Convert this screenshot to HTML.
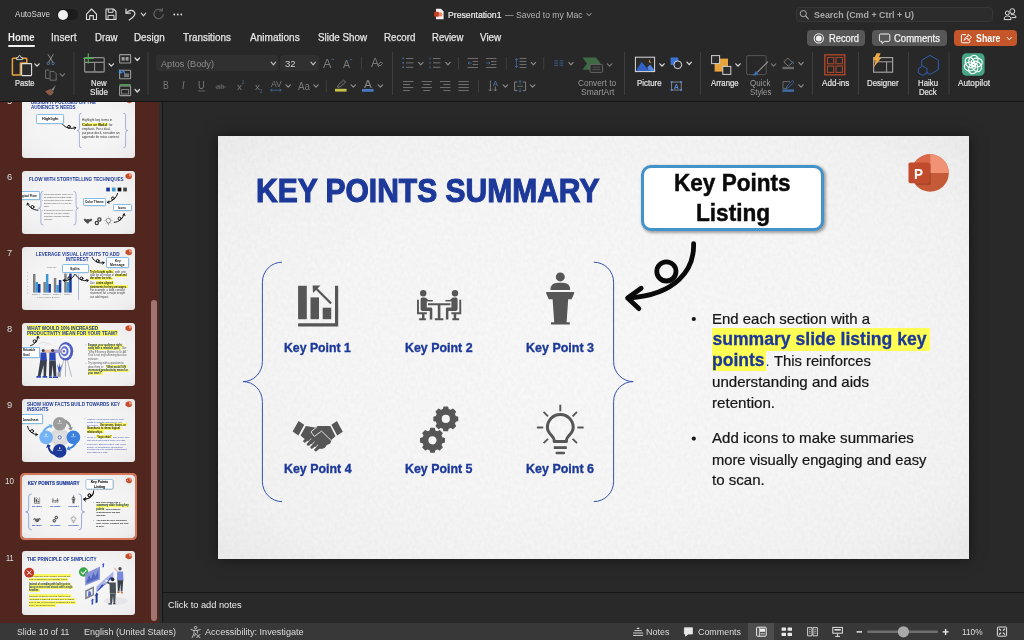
<!DOCTYPE html>
<html lang="en"><head><meta charset="utf-8"><title>Presentation1</title>
<style>
html,body{margin:0;padding:0;background:#292929}
body{width:1024px;height:640px;overflow:hidden;position:relative;font-family:"Liberation Sans",sans-serif}
.t{position:absolute;white-space:nowrap;line-height:1;transform-origin:0 0;display:block}
svg.ov{position:absolute;left:0;top:0;width:1024px;height:640px;overflow:visible;pointer-events:none}
#panel{position:absolute;left:0;top:102px;width:159.4px;height:521px;background:#50261f;overflow:hidden}
#slide{position:absolute;left:218.2px;top:135.9px;width:750.5px;height:422.7px;background:#f1f1f1;
 background-image:radial-gradient(ellipse 75% 75% at 50% 50%,#f8f8f8 0%,#f6f6f6 50%,#f2f2f2 78%,#e9e9e9 100%);box-shadow:0 0 14px rgba(0,0,0,0.5)}
</style></head><body>
<div id="root" style="position:absolute;left:0;top:0;width:1024px;height:640px;will-change:transform">
<div id="top" style="position:absolute;left:0;top:0;width:1024px;height:101.2px;background:#282828"></div>
<div style="position:absolute;left:0;top:100.95px;width:1024px;height:1.15px;background:#151515"></div>
<div style="position:absolute;left:159.4px;top:102px;width:2.5px;height:521px;background:#2e2e2e"></div><div style="position:absolute;left:161.9px;top:102px;width:1px;height:521px;background:#171717"></div>
<div id="panel"><div style="position:absolute;left:0;top:-102px;width:1024px;height:640px"><div style="position:absolute;left:22.0px;top:94.4px;width:113.1px;height:63.6px;border-radius:3px;background:#f1f1f1;background-image:radial-gradient(ellipse 75% 75% at 50% 50%,#f6f6f6 0%,#f4f4f4 50%,#eeeeee 80%,#e2e2e2 100%)"></div><div style="position:absolute;left:22.0px;top:170.6px;width:113.1px;height:63.6px;border-radius:3px;background:#f1f1f1;background-image:radial-gradient(ellipse 75% 75% at 50% 50%,#f6f6f6 0%,#f4f4f4 50%,#eeeeee 80%,#e2e2e2 100%)"></div><span class="t " style="left:7.20px;top:172.00px;font-size:9.6px;font-weight:400;color:#dedede;transform:scaleX(0.9731);">6</span><div style="position:absolute;left:22.0px;top:246.7px;width:113.1px;height:63.6px;border-radius:3px;background:#f1f1f1;background-image:radial-gradient(ellipse 75% 75% at 50% 50%,#f6f6f6 0%,#f4f4f4 50%,#eeeeee 80%,#e2e2e2 100%)"></div><span class="t " style="left:7.20px;top:248.00px;font-size:9.6px;font-weight:400;color:#dedede;transform:scaleX(0.9731);">7</span><div style="position:absolute;left:22.0px;top:322.8px;width:113.1px;height:63.6px;border-radius:3px;background:#f1f1f1;background-image:radial-gradient(ellipse 75% 75% at 50% 50%,#f6f6f6 0%,#f4f4f4 50%,#eeeeee 80%,#e2e2e2 100%)"></div><span class="t " style="left:7.20px;top:324.00px;font-size:9.6px;font-weight:400;color:#dedede;transform:scaleX(0.9731);">8</span><div style="position:absolute;left:22.0px;top:398.8px;width:113.1px;height:63.6px;border-radius:3px;background:#f1f1f1;background-image:radial-gradient(ellipse 75% 75% at 50% 50%,#f6f6f6 0%,#f4f4f4 50%,#eeeeee 80%,#e2e2e2 100%)"></div><span class="t " style="left:7.20px;top:400.00px;font-size:9.6px;font-weight:400;color:#dedede;transform:scaleX(0.9731);">9</span><div style="position:absolute;left:22.0px;top:474.9px;width:113.1px;height:63.6px;border-radius:3px;background:#f1f1f1;background-image:radial-gradient(ellipse 75% 75% at 50% 50%,#f6f6f6 0%,#f4f4f4 50%,#eeeeee 80%,#e2e2e2 100%)"></div><span class="t " style="left:5.40px;top:476.00px;font-size:9.6px;font-weight:400;color:#dedede;transform:scaleX(0.8433);">10</span><div style="position:absolute;left:22.0px;top:551.0px;width:113.1px;height:63.6px;border-radius:3px;background:#f1f1f1;background-image:radial-gradient(ellipse 75% 75% at 50% 50%,#f6f6f6 0%,#f4f4f4 50%,#eeeeee 80%,#e2e2e2 100%)"></div><span class="t " style="left:6.20px;top:553.00px;font-size:9.6px;font-weight:400;color:#dedede;transform:scaleX(0.7624);">11</span><span class="t " style="left:7.20px;top:96.00px;font-size:9.6px;font-weight:400;color:#dedede;transform:scaleX(0.9731);">5</span><span class="t " style="left:30.80px;top:100.00px;font-size:5.4px;font-weight:700;color:#1c3899;transform:scaleX(0.8478);">DESIGN IT FOCUSED ON THE</span><span class="t " style="left:30.80px;top:105.00px;font-size:5.4px;font-weight:700;color:#1c3899;transform:scaleX(0.8398);">AUDIENCE'S NEEDS</span><div style="position:absolute;left:36.3px;top:113.9px;width:27.6px;height:10.5px;box-sizing:border-box;border:0.6px solid #86bde6;border-radius:1.6px;background:#fff;box-shadow:0.2px 0.3px 0.6px rgba(0,0,0,.22)"></div><span class="t " style="left:42.00px;top:118.00px;font-size:3.6px;font-weight:700;color:#111;transform:scaleX(1.0528);">Highlight</span><span class="t " style="left:82.20px;top:119.00px;font-size:3px;font-weight:400;color:#333;transform:scaleX(1.0597);">Highlight key terms in</span><div style="position:absolute;left:82px;top:122.76px;width:25.8px;height:3.74px;background:#faf85e"></div><span class="t " style="left:82.20px;top:124.00px;font-size:3.4px;font-weight:700;color:#222;transform:scaleX(1.1443);">Color or Bold</span><span class="t " style="left:108.60px;top:124.00px;font-size:3px;font-weight:400;color:#333;transform:scaleX(1.0240);">for</span><span class="t " style="left:82.20px;top:128.00px;font-size:3px;font-weight:400;color:#333;transform:scaleX(0.9788);">emphasis. For a dual-</span><span class="t " style="left:82.20px;top:132.00px;font-size:3px;font-weight:400;color:#333;transform:scaleX(1.0681);">purpose deck, consider an</span><span class="t " style="left:82.20px;top:136.00px;font-size:3px;font-weight:400;color:#333;transform:scaleX(1.0526);">appendix for extra content.</span><span class="t " style="left:29.20px;top:177.00px;font-size:5.4px;font-weight:700;color:#1c3899;transform:scaleX(0.8537);">FLOW WITH STORYTELLING TECHNIQUES</span><div style="position:absolute;left:22px;top:191.4px;width:17.8px;height:8.9px;box-sizing:border-box;border:0.6px solid #86bde6;border-left:none;border-radius:0 1.6px 1.6px 0;background:#fff;box-shadow:0.2px 0.3px 0.6px rgba(0,0,0,.22)"></div><span class="t " style="left:22.40px;top:195.00px;font-size:3.2px;font-weight:700;color:#111;transform:scaleX(0.9467);">gical Flow</span><span class="t " style="left:44.40px;top:193.00px;font-size:2.2px;font-weight:400;color:#444;transform:scaleX(0.7948);">Lorem ipsum is simply dummy text of</span><span class="t " style="left:44.40px;top:196.00px;font-size:2.2px;font-weight:400;color:#444;transform:scaleX(0.8118);">the printing and typesetting industry.</span><span class="t " style="left:44.40px;top:199.00px;font-size:2.2px;font-weight:400;color:#444;transform:scaleX(0.7951);">Lorem ipsum has been the industry’s</span><span class="t " style="left:44.40px;top:202.00px;font-size:2.2px;font-weight:400;color:#444;transform:scaleX(0.7906);">standard dummy text ever since the</span><span class="t " style="left:44.40px;top:205.00px;font-size:2.2px;font-weight:400;color:#444;transform:scaleX(0.7601);">1500s.</span><span class="t " style="left:44.40px;top:209.00px;font-size:2.2px;font-weight:400;color:#444;transform:scaleX(0.7949);">It has survived not only five centuries,</span><span class="t " style="left:44.40px;top:212.00px;font-size:2.2px;font-weight:400;color:#444;transform:scaleX(0.8418);">but also the leap into electronic</span><span class="t " style="left:44.40px;top:215.00px;font-size:2.2px;font-weight:400;color:#444;transform:scaleX(0.8066);">typesetting, remaining essentially</span><span class="t " style="left:44.40px;top:218.00px;font-size:2.2px;font-weight:400;color:#444;transform:scaleX(0.7519);">unchanged.</span><div style="position:absolute;left:82.9px;top:198.4px;width:22.9px;height:8.0px;box-sizing:border-box;border:0.6px solid #86bde6;border-radius:1.6px;background:#fff;box-shadow:0.2px 0.3px 0.6px rgba(0,0,0,.22)"></div><span class="t " style="left:85.00px;top:201.00px;font-size:3.2px;font-weight:700;color:#111;transform:scaleX(0.9546);">Color Theme</span><div style="position:absolute;left:113px;top:204.3px;width:18.8px;height:7.1px;box-sizing:border-box;border:0.6px solid #86bde6;border-radius:1.6px;background:#fff;box-shadow:0.2px 0.3px 0.6px rgba(0,0,0,.22)"></div><span class="t " style="left:118.40px;top:207.00px;font-size:3.2px;font-weight:700;color:#111;transform:scaleX(0.9606);">Icons</span><span class="t " style="left:35.70px;top:252.00px;font-size:5.4px;font-weight:700;color:#1c3899;transform:scaleX(0.8386);">LEVERAGE VISUAL LAYOUTS TO ADD</span><span class="t " style="left:65.80px;top:257.00px;font-size:5.4px;font-weight:700;color:#1c3899;transform:scaleX(0.8478);">INTEREST</span><div style="position:absolute;left:106.2px;top:257.2px;width:22.4px;height:11.2px;box-sizing:border-box;border:0.6px solid #86bde6;border-radius:1.6px;background:#fff;box-shadow:0.2px 0.3px 0.6px rgba(0,0,0,.22)"></div><span class="t " style="left:114.60px;top:260.00px;font-size:3.4px;font-weight:700;color:#111;transform:scaleX(0.8982);">Key</span><span class="t " style="left:110.20px;top:264.00px;font-size:3.4px;font-weight:700;color:#111;transform:scaleX(1.0190);">Message</span><span class="t " style="left:46.60px;top:266.00px;font-size:2px;font-weight:400;color:#777;transform:scaleX(1.0301);">Chart Title</span><span class="t " style="left:32.40px;top:294.00px;font-size:1.7px;font-weight:400;color:#666;transform:scaleX(0.9195);">Category 1</span><span class="t " style="left:42.80px;top:294.00px;font-size:1.7px;font-weight:400;color:#666;transform:scaleX(0.9195);">Category 2</span><span class="t " style="left:53.20px;top:294.00px;font-size:1.7px;font-weight:400;color:#666;transform:scaleX(0.9195);">Category 3</span><span class="t " style="left:63.60px;top:294.00px;font-size:1.7px;font-weight:400;color:#666;transform:scaleX(0.9195);">Category 4</span><span class="t " style="left:38.60px;top:297.00px;font-size:1.6px;font-weight:400;color:#666;transform:scaleX(0.9216);">Series 1</span><span class="t " style="left:46.20px;top:297.00px;font-size:1.6px;font-weight:400;color:#666;transform:scaleX(0.9216);">Series 2</span><span class="t " style="left:53.60px;top:297.00px;font-size:1.6px;font-weight:400;color:#666;transform:scaleX(0.9216);">Series 3</span><div style="position:absolute;left:61.7px;top:263.6px;width:27.6px;height:9.9px;box-sizing:border-box;border:0.6px solid #86bde6;border-radius:1.6px;background:#fff;box-shadow:0.2px 0.3px 0.6px rgba(0,0,0,.22)"></div><span class="t " style="left:70.40px;top:268.00px;font-size:3.5px;font-weight:700;color:#111;transform:scaleX(1.0282);">Splits</span><div style="position:absolute;left:90px;top:270.23px;width:24.2px;height:3.19px;background:#faf85e"></div><span class="t " style="left:90.40px;top:271.00px;font-size:2.9px;font-weight:700;color:#222;transform:scaleX(0.8989);">Try left-right splits,</span><span class="t " style="left:114.80px;top:271.00px;font-size:2.9px;font-weight:400;color:#444;transform:scaleX(1.0203);">with one</span><span class="t " style="left:90.40px;top:274.00px;font-size:2.9px;font-weight:400;color:#444;transform:scaleX(0.9467);">side for an image or</span><div style="position:absolute;left:114.8px;top:273.53px;width:12.6px;height:3.19px;background:#faf85e"></div><span class="t " style="left:115.20px;top:274.00px;font-size:2.9px;font-weight:700;color:#222;transform:scaleX(0.8345);">visual and</span><div style="position:absolute;left:90px;top:276.93px;width:22.6px;height:3.19px;background:#faf85e"></div><span class="t " style="left:90.40px;top:277.00px;font-size:2.9px;font-weight:700;color:#222;transform:scaleX(0.9167);">the other for text.</span><span class="t " style="left:90.40px;top:282.00px;font-size:2.9px;font-weight:400;color:#444;transform:scaleX(0.8948);">Use</span><div style="position:absolute;left:95.8px;top:281.43px;width:17.8px;height:3.19px;background:#faf85e"></div><span class="t " style="left:96.20px;top:282.00px;font-size:2.9px;font-weight:700;color:#222;transform:scaleX(0.8601);">centre-aligned</span><div style="position:absolute;left:90px;top:285.13px;width:37.6px;height:3.19px;background:#faf85e"></div><span class="t " style="left:90.40px;top:286.00px;font-size:2.9px;font-weight:700;color:#222;transform:scaleX(0.8945);">statements for key messages.</span><span class="t " style="left:90.40px;top:289.00px;font-size:2.9px;font-weight:400;color:#444;transform:scaleX(0.9403);">For example, a bold, centred</span><span class="t " style="left:90.40px;top:292.00px;font-size:2.9px;font-weight:400;color:#444;transform:scaleX(0.9593);">statement for a major insight</span><span class="t " style="left:90.40px;top:296.00px;font-size:2.9px;font-weight:400;color:#444;transform:scaleX(0.9304);">can add impact.</span><div style="position:absolute;left:26.6px;top:324.98px;width:72.4px;height:5.94px;background:#faf85e"></div><span class="t " style="left:27.20px;top:326.00px;font-size:5.4px;font-weight:700;color:#1c3899;transform:scaleX(0.8561);">WHAT WOULD 10% INCREASED</span><div style="position:absolute;left:26.6px;top:330.38px;width:91.8px;height:5.94px;background:#faf85e"></div><span class="t " style="left:27.20px;top:331.00px;font-size:5.4px;font-weight:700;color:#1c3899;transform:scaleX(0.8441);">PRODUCTIVITY MEAN FOR YOUR TEAM?</span><div style="position:absolute;left:22px;top:347.2px;width:18.4px;height:10.4px;box-sizing:border-box;border:0.6px solid #86bde6;border-left:none;border-radius:0 1.6px 1.6px 0;background:#fff;box-shadow:0.2px 0.3px 0.6px rgba(0,0,0,.22)"></div><span class="t " style="left:22.60px;top:349.00px;font-size:3.2px;font-weight:700;color:#111;transform:scaleX(0.8740);">Relatable</span><span class="t " style="left:22.60px;top:354.00px;font-size:3.2px;font-weight:700;color:#111;transform:scaleX(0.9304);">Goal</span><div style="position:absolute;left:88px;top:343.54px;width:34.6px;height:2.97px;background:#faf85e"></div><span class="t " style="left:88.40px;top:345.00px;font-size:2.7px;font-weight:700;color:#1c2f80;transform:scaleX(0.9490);">Engage your audience right</span><div style="position:absolute;left:88px;top:347.14px;width:32.6px;height:2.97px;background:#faf85e"></div><span class="t " style="left:88.40px;top:348.00px;font-size:2.7px;font-weight:700;color:#1c2f80;transform:scaleX(0.9418);">away with a relatable goal,</span><span class="t " style="left:121.60px;top:348.00px;font-size:2.7px;font-weight:400;color:#555;transform:scaleX(1.0873);">like</span><span class="t " style="left:88.40px;top:352.00px;font-size:2.7px;font-weight:400;color:#555;transform:scaleX(0.9797);">“Why Efficiency Matters to Us All.”</span><span class="t " style="left:88.40px;top:355.00px;font-size:2.7px;font-weight:400;color:#555;transform:scaleX(0.9823);">This is not only affirming but also</span><span class="t " style="left:88.40px;top:359.00px;font-size:2.7px;font-weight:400;color:#555;transform:scaleX(0.9401);">inclusive.</span><span class="t " style="left:88.40px;top:363.00px;font-size:2.7px;font-weight:400;color:#555;transform:scaleX(0.9954);">Try opening with a question to</span><span class="t " style="left:88.40px;top:367.00px;font-size:2.7px;font-weight:400;color:#555;transform:scaleX(0.9789);">draw them in:</span><div style="position:absolute;left:105.6px;top:365.34px;width:21.0px;height:2.97px;background:#faf85e"></div><span class="t " style="left:106.20px;top:367.00px;font-size:2.7px;font-weight:700;color:#1c2f80;transform:scaleX(0.8870);">“What would 10%</span><div style="position:absolute;left:88px;top:368.74px;width:40.6px;height:2.97px;background:#faf85e"></div><span class="t " style="left:88.40px;top:370.00px;font-size:2.7px;font-weight:700;color:#1c2f80;transform:scaleX(0.9759);">increased productivity mean for</span><div style="position:absolute;left:88px;top:372.14px;width:15.0px;height:2.97px;background:#faf85e"></div><span class="t " style="left:88.40px;top:373.00px;font-size:2.7px;font-weight:700;color:#1c2f80;transform:scaleX(0.8963);">your team?”</span><span class="t " style="left:27.20px;top:402.00px;font-size:5.4px;font-weight:700;color:#1c3899;transform:scaleX(0.8446);">SHOW HOW FACTS BUILD TOWARDS KEY</span><span class="t " style="left:27.20px;top:407.00px;font-size:5.4px;font-weight:700;color:#1c3899;transform:scaleX(0.8481);">INSIGHTS</span><div style="position:absolute;left:22px;top:414.3px;width:20.7px;height:10.2px;box-sizing:border-box;border:0.6px solid #86bde6;border-left:none;border-radius:0 1.6px 1.6px 0;background:#fff;box-shadow:0.2px 0.3px 0.6px rgba(0,0,0,.22)"></div><span class="t " style="left:22.60px;top:419.00px;font-size:3.4px;font-weight:700;color:#111;transform:scaleX(1.1037);">lowchart</span><span class="t " style="left:87.40px;top:419.00px;font-size:2.5px;font-weight:400;color:#3a4fa8;transform:scaleX(0.9336);">Illustrate connections between data</span><span class="t " style="left:87.40px;top:422.00px;font-size:2.5px;font-weight:400;color:#3a4fa8;transform:scaleX(0.9259);">points to lead the audience to your</span><span class="t " style="left:87.40px;top:425.00px;font-size:2.5px;font-weight:400;color:#3a4fa8;transform:scaleX(0.9268);">conclusion.</span><div style="position:absolute;left:100px;top:423.44px;width:26.6px;height:2.97px;background:#faf85e"></div><span class="t " style="left:100.40px;top:425.00px;font-size:2.7px;font-weight:700;color:#222;transform:scaleX(0.9235);">Use arrows, boxes, or</span><div style="position:absolute;left:87px;top:426.84px;width:34.0px;height:2.97px;background:#faf85e"></div><span class="t " style="left:87.40px;top:428.00px;font-size:2.7px;font-weight:700;color:#222;transform:scaleX(0.9819);">flowcharts to show logical</span><div style="position:absolute;left:87px;top:430.34px;width:16.6px;height:2.97px;background:#faf85e"></div><span class="t " style="left:87.40px;top:432.00px;font-size:2.7px;font-weight:700;color:#222;transform:scaleX(0.9037);">relationships.</span><span class="t " style="left:87.40px;top:437.00px;font-size:2.5px;font-weight:400;color:#3a4fa8;transform:scaleX(0.8756);">Create a</span><div style="position:absolute;left:96.4px;top:435.34px;width:15.6px;height:2.97px;background:#faf85e"></div><span class="t " style="left:96.80px;top:437.00px;font-size:2.7px;font-weight:700;color:#222;transform:scaleX(0.8844);">“logic chain”</span><span class="t " style="left:112.80px;top:437.00px;font-size:2.5px;font-weight:400;color:#3a4fa8;transform:scaleX(0.8739);">slide where each</span><span class="t " style="left:87.40px;top:440.00px;font-size:2.5px;font-weight:400;color:#3a4fa8;transform:scaleX(0.9140);">data point connects to build your case.</span><span class="t " style="left:87.40px;top:444.00px;font-size:2.5px;font-weight:400;color:#3a4fa8;transform:scaleX(0.9129);">Reference: Edward Tufte’s “The Visual</span><span class="t " style="left:87.40px;top:447.00px;font-size:2.5px;font-weight:400;color:#3a4fa8;transform:scaleX(0.9220);">Display of Quantitative Information”</span><span class="t " style="left:87.40px;top:449.00px;font-size:2.5px;font-weight:400;color:#3a4fa8;transform:scaleX(0.9285);">explains ways to illustrate relationships</span><span class="t " style="left:87.40px;top:452.00px;font-size:2.5px;font-weight:400;color:#3a4fa8;transform:scaleX(0.9212);">and patterns in data.</span><span class="t " style="left:27.20px;top:557.00px;font-size:5.4px;font-weight:700;color:#1c3899;transform:scaleX(0.8512);">THE PRINCIPLE OF SIMPLICITY</span><div style="position:absolute;left:28.8px;top:574.45px;width:41.8px;height:2.75px;background:#faf85e"></div><span class="t " style="left:29.20px;top:576.00px;font-size:2.5px;font-weight:400;color:#333;transform:scaleX(0.8039);">Keep slides free from excessive elements that</span><div style="position:absolute;left:28.8px;top:577.85px;width:39.4px;height:2.75px;background:#faf85e"></div><span class="t " style="left:29.20px;top:579.00px;font-size:2.5px;font-weight:400;color:#333;transform:scaleX(0.7825);">dilute or distract from your message content.</span><div style="position:absolute;left:28.8px;top:582.54px;width:42.4px;height:2.97px;background:#faf85e"></div><span class="t " style="left:29.20px;top:584.00px;font-size:2.7px;font-weight:700;color:#1c2f80;transform:scaleX(0.8493);">Instead of crowding with bullet points,</span><div style="position:absolute;left:28.8px;top:585.84px;width:44.4px;height:2.97px;background:#faf85e"></div><span class="t " style="left:29.20px;top:587.00px;font-size:2.7px;font-weight:700;color:#1c2f80;transform:scaleX(0.8342);">focus on one or two visuals with a single</span><div style="position:absolute;left:28.8px;top:589.14px;width:10.8px;height:2.97px;background:#faf85e"></div><span class="t " style="left:29.20px;top:590.00px;font-size:2.7px;font-weight:700;color:#1c2f80;transform:scaleX(0.8579);">headline.</span><div style="position:absolute;left:28.8px;top:594.45px;width:42.4px;height:2.75px;background:#faf85e"></div><span class="t " style="left:29.20px;top:596.00px;font-size:2.5px;font-weight:400;color:#333;transform:scaleX(0.8675);">Simplicity means we have the guts to point.</span><div style="position:absolute;left:28.8px;top:597.65px;width:45.8px;height:2.75px;background:#faf85e"></div><span class="t " style="left:29.20px;top:599.00px;font-size:2.5px;font-weight:400;color:#333;transform:scaleX(0.8345);">“Perfection is achieved not when there is nothing</span><div style="position:absolute;left:28.8px;top:600.95px;width:46.8px;height:2.75px;background:#faf85e"></div><span class="t " style="left:29.20px;top:602.00px;font-size:2.5px;font-weight:400;color:#333;transform:scaleX(0.8378);">more to add, but when there is nothing left to take</span><div style="position:absolute;left:28.8px;top:604.25px;width:27.4px;height:2.75px;background:#faf85e"></div><span class="t " style="left:29.20px;top:605.00px;font-size:2.5px;font-weight:400;color:#333;transform:scaleX(0.8296);">away,” as a guiding principle.</span><svg class="ov" viewBox="0 0 1024 640"><circle cx="129.4" cy="100.2" r="3.0" fill="#c55a38"/><path d="M129.4,100.2 V97.2 A3.0,3.0 0 0 1 132.4,100.2 Z" fill="#f09273"/><rect x="125.95" y="98.52" width="3.36" height="3.36" rx="0.3" fill="#c14b2c"/><g fill="none" stroke="#111" stroke-width="1.0" stroke-linecap="round" stroke-linejoin="round"><path d="M62.60,124.40 C65.88,128.23 71.16,129.47 75.80,127.50"/><circle cx="69.01" cy="126.77" r="1.40"/><path d="M73.84,127.11 L75.80,127.50 L74.72,129.19"/></g><path d="M81.6,113.2 A2.1999999999999957,2.1999999999999957 0 0 0 79.4,115.4 V128.3 A2.1999999999999957,2.1999999999999957 0 0 1 77.2,130.5 A2.1999999999999957,2.1999999999999957 0 0 1 79.4,132.7 V145.60000000000002 A2.1999999999999957,2.1999999999999957 0 0 0 81.6,147.8" fill="none" stroke="#5570c0" stroke-width="0.5"/><path d="M123.4,113.2 A2.1999999999999957,2.1999999999999957 0 0 1 125.6,115.4 V128.3 A2.1999999999999957,2.1999999999999957 0 0 0 127.8,130.5 A2.1999999999999957,2.1999999999999957 0 0 0 125.6,132.7 V145.60000000000002 A2.1999999999999957,2.1999999999999957 0 0 1 123.4,147.8" fill="none" stroke="#5570c0" stroke-width="0.5"/><circle cx="129" cy="176.2" r="3.0" fill="#c55a38"/><path d="M129,176.2 V173.2 A3.0,3.0 0 0 1 132.0,176.2 Z" fill="#f09273"/><rect x="125.55" y="174.52" width="3.36" height="3.36" rx="0.3" fill="#c14b2c"/><rect x="106.2" y="187.6" width="3.7" height="3.8" fill="#1c3899"/><rect x="111.9" y="187.6" width="3.7" height="3.8" fill="#3a98d4"/><rect x="117.6" y="187.6" width="3.7" height="3.8" fill="#0a0a0a"/><rect x="123.2" y="187.6" width="3.7" height="3.8" fill="#444"/><g fill="none" stroke="#111" stroke-width="0.95" stroke-linecap="round" stroke-linejoin="round"><path d="M38.00,210.20 C33.42,210.22 29.18,207.42 27.40,203.20"/><circle cx="32.48" cy="207.04" r="1.50"/><path d="M27.00,205.16 L27.40,203.20 L29.08,204.28"/></g><path d="M43.2,191.4 A2.3000000000000007,2.3000000000000007 0 0 0 40.900000000000006,193.70000000000002 V205.89999999999998 A2.3000000000000007,2.3000000000000007 0 0 1 38.6,208.2 A2.3000000000000007,2.3000000000000007 0 0 1 40.900000000000006,210.5 V222.7 A2.3000000000000007,2.3000000000000007 0 0 0 43.2,225" fill="none" stroke="#5570c0" stroke-width="0.5"/><path d="M73.6,191.4 A2.4000000000000057,2.4000000000000057 0 0 1 76.0,193.8 V205.79999999999998 A2.4000000000000057,2.4000000000000057 0 0 0 78.4,208.2 A2.4000000000000057,2.4000000000000057 0 0 0 76.0,210.6 V222.6 A2.4000000000000057,2.4000000000000057 0 0 1 73.6,225" fill="none" stroke="#5570c0" stroke-width="0.5"/><circle cx="42.6" cy="194.3" r="0.3" fill="#444"/><circle cx="42.6" cy="200.6" r="0.3" fill="#444"/><circle cx="42.6" cy="210.5" r="0.3" fill="#444"/><g fill="none" stroke="#111" stroke-width="1.0" stroke-linecap="round" stroke-linejoin="round"><path d="M117.60,193.40 C116.32,198.11 112.24,201.67 107.40,202.30"/><circle cx="112.91" cy="198.33" r="1.40"/><path d="M109.18,203.21 L107.40,202.30 L108.89,200.97"/></g><g fill="none" stroke="#111" stroke-width="0.95" stroke-linecap="round" stroke-linejoin="round"><path d="M114.20,222.40 C119.09,222.02 123.09,218.58 124.20,213.80"/><circle cx="119.64" cy="218.61" r="1.50"/><path d="M122.73,215.15 L124.20,213.80 L124.93,215.66"/></g><path d="M83.6,219.6 L85,218.6 L86.2,219.4 L88,219 L89.8,219.4 L91,218.6 L92.4,219.6 L91.2,221.2 L89.6,221.4 L88.4,223.6 L87.2,223.4 L85,221.4 Z" fill="#4a4a4a"/><circle cx="99.4" cy="219.4" r="1.6" fill="none" stroke="#444" stroke-width="1.3"/><circle cx="96.8" cy="223" r="1.6" fill="none" stroke="#444" stroke-width="1.3"/><circle cx="108.4" cy="220.6" r="2.2" fill="none" stroke="#555" stroke-width="0.6"/><path d="M107.4,223.6 H109.4 M107.8,224.8 H109 M108.4,216.4 V217.4 M104.4,220.6 H105.4 M111.4,220.6 H112.4 M105.6,217.8 L106.3,218.5 M111.2,217.8 L110.5,218.5 M105.6,223.4 L106.3,222.7 M111.2,223.4 L110.5,222.7" stroke="#555" stroke-width="0.5"/><circle cx="129" cy="252.2" r="3.0" fill="#c55a38"/><path d="M129,252.2 V249.2 A3.0,3.0 0 0 1 132.0,252.2 Z" fill="#f09273"/><rect x="125.55" y="250.52" width="3.36" height="3.36" rx="0.3" fill="#c14b2c"/><g fill="none" stroke="#111" stroke-width="1.0" stroke-linecap="round" stroke-linejoin="round"><path d="M92.10,257.40 C94.45,261.84 99.25,263.92 104.10,262.60"/><circle cx="97.72" cy="260.88" r="1.40"/><path d="M102.21,261.94 L104.10,262.60 L102.80,264.12"/></g><rect x="33.0" y="274" width="2.5" height="18.6" fill="#808080"/><rect x="35.5" y="282" width="2.5" height="10.6" fill="#3a98d4"/><rect x="38.0" y="284" width="2.5" height="8.6" fill="#1c3899"/><rect x="43.4" y="282" width="2.5" height="10.6" fill="#808080"/><rect x="45.9" y="274" width="2.5" height="18.6" fill="#3a98d4"/><rect x="48.4" y="284" width="2.5" height="8.6" fill="#1c3899"/><rect x="53.8" y="278" width="2.5" height="14.6" fill="#808080"/><rect x="56.3" y="285" width="2.5" height="7.6" fill="#3a98d4"/><rect x="58.8" y="280" width="2.5" height="12.6" fill="#1c3899"/><rect x="64.2" y="273.6" width="2.5" height="19.0" fill="#808080"/><rect x="66.7" y="282" width="2.5" height="10.6" fill="#3a98d4"/><rect x="69.2" y="273.6" width="2.5" height="19.0" fill="#1c3899"/><rect x="27" y="272.40000000000003" width="1.2" height="0.4" fill="#888"/><rect x="27" y="275.8" width="1.2" height="0.4" fill="#888"/><rect x="27" y="279.2" width="1.2" height="0.4" fill="#888"/><rect x="27" y="282.6" width="1.2" height="0.4" fill="#888"/><rect x="27" y="286.0" width="1.2" height="0.4" fill="#888"/><rect x="27" y="289.40000000000003" width="1.2" height="0.4" fill="#888"/><rect x="27" y="292.8" width="1.2" height="0.4" fill="#888"/><rect x="37.2" y="297" width="1" height="0.6" fill="#808080"/><rect x="44.800000000000004" y="297" width="1" height="0.6" fill="#3a98d4"/><rect x="52.2" y="297" width="1" height="0.6" fill="#1c3899"/><rect x="78.3" y="273.6" width="0.45" height="26.6" fill="#5570c0"/><g fill="none" stroke="#111" stroke-width="1.0" stroke-linecap="round" stroke-linejoin="round"><path d="M74.50,274.60 C72.48,279.02 67.96,281.30 63.20,280.30"/><circle cx="69.25" cy="278.23" r="1.40"/><path d="M64.58,281.75 L63.20,280.30 L65.05,279.54"/></g><g fill="none" stroke="#111" stroke-width="1.0" stroke-linecap="round" stroke-linejoin="round"><path d="M75.70,274.60 C78.08,279.31 83.08,281.59 88.20,280.30"/><circle cx="81.50" cy="278.43" r="1.40"/><path d="M86.32,279.61 L88.20,280.30 L86.88,281.80"/></g><circle cx="129" cy="328.2" r="3.0" fill="#c55a38"/><path d="M129,328.2 V325.2 A3.0,3.0 0 0 1 132.0,328.2 Z" fill="#f09273"/><rect x="125.55" y="326.52" width="3.36" height="3.36" rx="0.3" fill="#c14b2c"/><g fill="none" stroke="#111" stroke-width="0.95" stroke-linecap="round" stroke-linejoin="round"><path d="M30.60,345.60 C34.84,344.47 37.80,340.79 38.00,336.40"/><circle cx="34.65" cy="341.28" r="1.50"/><path d="M36.80,338.00 L38.00,336.40 L39.05,338.10"/></g><path d="M64.2,358 L59.4,376.8 M66.8,358 L71.6,376.8 M65.5,358 V376.8" stroke="#9aa0a8" stroke-width="0.7" fill="none"/><ellipse cx="65.8" cy="351.3" rx="7.4" ry="9.3" fill="#4a5fc0"/><ellipse cx="65" cy="351.3" rx="5.4" ry="7" fill="#f4f4fa"/><ellipse cx="64.6" cy="351.3" rx="3.9" ry="5" fill="#5a6fd0"/><ellipse cx="64.2" cy="351.3" rx="2.3" ry="3" fill="#f4f4fa"/><ellipse cx="64" cy="351.3" rx="1" ry="1.3" fill="#4a5fc0"/><rect x="43" y="349.8" width="19.6" height="3" rx="1" fill="#e9b9a6"/><rect x="52.6" y="349.6" width="9" height="3.4" fill="#8a96d8" opacity="0.8"/><circle cx="43.2" cy="350.6" r="1.5" fill="#3a3a4a"/><circle cx="52.6" cy="350.4" r="1.5" fill="#3a3a4a"/><path d="M40.6,352.6 H46.2 L47,361 H40.2 Z" fill="#2a46b8"/><path d="M49.4,352.6 H55.4 L55.8,360.6 H49.2 Z" fill="#2a46b8"/><path d="M40.2,360.6 H46.8 L46,376 H43.6 L43.6,365 L40.6,376 H37.8 Z" fill="#3a3f4c"/><path d="M49.2,360.4 H55.8 L56.4,376.6 H53.6 L52.6,365 L51.6,376.6 H49 Z" fill="#3a3f4c"/><path d="M36.4,376 H41 V377.8 H36.4 Z M42.6,376 H47.2 V377.8 H42.6 Z M49,376.6 H52.2 V378 H49 Z M53,376.6 H58 V378 H53 Z" fill="#2a46b8"/><path d="M58.6,372 L57,364 L58.8,367.6 L59.4,362.6 L60,367.6 L62,364.4 L60.2,372 Z" fill="#3a55c8"/><rect x="57.6" y="372" width="3.2" height="4.8" fill="#9aa0a8"/><path d="M39.6,343.6 Q43,341 47,343.4 M45,344.8 Q48,342.6 51,344.6" stroke="#c8c8cc" stroke-width="0.4" fill="none"/><rect x="85.2" y="344.8" width="1.2" height="0.4" fill="#6a7ac0"/><rect x="85.2" y="363.1" width="1.2" height="0.4" fill="#6a7ac0"/><circle cx="129" cy="404.2" r="3.0" fill="#c55a38"/><path d="M129,404.2 V401.2 A3.0,3.0 0 0 1 132.0,404.2 Z" fill="#f09273"/><rect x="125.55" y="402.52" width="3.36" height="3.36" rx="0.3" fill="#c14b2c"/><g fill="none" stroke="#111" stroke-width="0.95" stroke-linecap="round" stroke-linejoin="round"><path d="M27.60,426.40 C28.57,431.21 32.49,434.49 37.40,434.60"/><circle cx="31.99" cy="431.11" r="1.50"/><path d="M35.77,433.43 L37.40,434.60 L35.72,435.69"/></g><path d="M59.7,424 L73,437.4 L59.7,450.6 L46.4,437.4 Z" fill="#dcdcdc"/><path d="M63.6,419 Q70.6,421 71.4,427.6 L73,426.8 L71.2,430.6 L68,428.6 L69.8,428 Q68.6,423.4 63,421.6 Z" fill="#8f8f8f"/><path d="M77.6,441.6 Q75.6,447.6 70,449 L70.6,450.6 L66.6,449.4 L68.4,446 L69.2,447.4 Q73.6,446.4 75.4,441 Z" fill="#3a80dc"/><path d="M55.6,455.6 Q48.6,453.6 47.6,447.2 L46,448 L47.8,444 L51,446 L49.4,446.8 Q50.4,451.4 56,453.2 Z" fill="#1c3899"/><path d="M41.8,433 Q43.6,427.2 49.4,425.6 L48.8,424 L52.8,425.2 L51,428.6 L50.2,427.2 Q45.8,428.2 44,433.6 Z" fill="#6aaef0"/><circle cx="59.7" cy="423.8" r="6.8" fill="#9c9c9c"/><rect x="57.300000000000004" y="422.90000000000003" width="4.8" height="0.6" fill="#fff" opacity="0.7"/><rect x="59.0" y="420.2" width="1.4" height="1.8" fill="#fff" opacity="0.8"/><circle cx="46.1" cy="437.4" r="6.8" fill="#74b4f4"/><rect x="43.7" y="436.5" width="4.8" height="0.6" fill="#fff" opacity="0.7"/><rect x="45.4" y="433.79999999999995" width="1.4" height="1.8" fill="#fff" opacity="0.8"/><circle cx="73.4" cy="437.4" r="6.8" fill="#3a80dc"/><rect x="71.0" y="436.5" width="4.8" height="0.6" fill="#fff" opacity="0.7"/><rect x="72.7" y="433.79999999999995" width="1.4" height="1.8" fill="#fff" opacity="0.8"/><circle cx="59.7" cy="450.9" r="6.8" fill="#1c3899"/><rect x="57.300000000000004" y="450.0" width="4.8" height="0.6" fill="#fff" opacity="0.7"/><rect x="59.0" y="447.29999999999995" width="1.4" height="1.8" fill="#fff" opacity="0.8"/><circle cx="59.7" cy="437.4" r="3.2" fill="#ececec"/><circle cx="59.7" cy="437.4" r="1.7" fill="none" stroke="#1c3899" stroke-width="0.7"/><rect x="84.4" y="418.40000000000003" width="0.8" height="0.8" fill="#9aa6d8"/><rect x="84.4" y="436.40000000000003" width="0.8" height="0.8" fill="#9aa6d8"/><rect x="84.4" y="443.6" width="0.8" height="0.8" fill="#9aa6d8"/><circle cx="129" cy="556.3" r="3.0" fill="#c55a38"/><path d="M129,556.3 V553.3 A3.0,3.0 0 0 1 132.0,556.3 Z" fill="#f09273"/><rect x="125.55" y="554.62" width="3.36" height="3.36" rx="0.3" fill="#c14b2c"/><circle cx="29.2" cy="572.7" r="4.9" fill="#c0392b"/><path d="M27.4,570.9 L31,574.5 M31,570.9 L27.4,574.5" stroke="#fff" stroke-width="1" stroke-linecap="round"/><circle cx="83.6" cy="572" r="4.7" fill="#3aa64a"/><path d="M81.2,572 L83,574 L86.2,570.4" stroke="#fff" stroke-width="1.1" fill="none" stroke-linecap="round" stroke-linejoin="round"/><path d="M85.2,573.4 L100,566.6 V579.6 L85.2,585.6 Z" fill="#8a96d8"/><path d="M86.6,581.6 L89,575 L91,579 L93.4,572.4 L95.4,576.6 L98.4,569.6 V578.6 L86.6,583.6 Z" fill="#5468c0"/><path d="M96.4,586.4 L113.4,571.6 V577.6 L96.4,592.6 Z" fill="#aab2e6"/><path d="M97.4,590.6 L102,584.6 L105,585 L110,577.6 L112.6,577 L97.4,591.6 Z" fill="#2a46b8"/><path d="M85.2,590.4 L94,586.2 V595.2 L85.2,599.4 Z" fill="#7a7f8a"/><path d="M86.6,591.4 L92.6,588.6 V594.2 L86.6,597 Z" fill="#e8eaf4"/><path d="M88.6,591 Q91.4,591 91,595 L88,596.2 Z" fill="#5468c0"/><path d="M95.6,603.2 V595.6 L94.4,596.2 L96.6,592.6 L98.6,594.4 L97.6,594.8 V602.2 Z" fill="#1c3899"/><path d="M91.6,605 V600.6 L90.6,601.2 L92.4,598.4 L94,599.8 L93.2,600.2 V604.2 Z" fill="#3a55c8"/><path d="M102.6,567.6 V564.8 L101.8,565.2 L103.2,563 L104.6,564.2 L104,564.6 V567 Z" fill="#3a55c8"/><ellipse cx="116" cy="601" rx="12" ry="4" fill="#e6e6ea"/><circle cx="120" cy="568.8" r="1.7" fill="#4a4a55"/><path d="M117.2,571.6 H123 L123.6,580.4 H117 Z" fill="#7a8ad8"/><path d="M117.2,572 L114.6,569.6 L114,568 L114.8,567.6 L117.4,570.8 Z" fill="#e9b9a6"/><path d="M117.4,580.2 H123.2 L122.4,591.6 H120.8 L120.4,583.6 L119.4,591.6 H117.8 Z" fill="#3a3f4c"/><path d="M117.2,591.6 H119.6 V593 H117.2 Z M120.8,592 H123 V593.6 H120.8 Z" fill="#c8855a"/><circle cx="112.6" cy="579.4" r="1.8" fill="#2a2a33"/><path d="M109.6,582.6 H115.8 L116,593.6 H109.8 Z" fill="#4a5058"/><path d="M109.8,584.6 L106.6,583 L106.2,581.4 L107.6,581 L110.2,583 Z" fill="#4a5058"/><circle cx="106.4" cy="581" r="1.3" fill="#f0f0f4"/><path d="M110,593.4 H115.8 L115.2,603 H113.6 L113,596 L112,603.6 H110.2 Z" fill="#4a5058"/><path d="M108.4,603.2 H112 V604.6 H108.4 Z M113.2,603 H115.4 V604.2 H113.2 Z" fill="#3a3f4c"/></svg><div style="position:absolute;left:0;top:0;width:1024px;height:640px;transform-origin:0 0;transform:translate(22.0px,474.9px) scale(0.15057) translate(-218.2px,-135.9px)"><svg class="ov" viewBox="0 0 1024 640"><path d="M282,262.2 A19.6,20 0 0 0 262.4,282.2 V361.6 A19.4,20 0 0 1 243,381.6 A19.4,20 0 0 1 262.4,401.6 V481.6 A19.6,20 0 0 0 282,501.6" fill="none" stroke="#3553ae" stroke-width="1"/><path d="M593.8,262.2 A19.8,20 0 0 1 613.6,282.2 V361.6 A19.6,20 0 0 0 633.2,381.6 A19.6,20 0 0 0 613.6,401.6 V481.6 A19.8,20 0 0 1 593.8,501.6" fill="none" stroke="#3553ae" stroke-width="1"/><g fill="#565656"><rect x="298.1" y="285.8" width="8.7" height="33.4"/><rect x="310.5" y="297.4" width="8.5" height="21.8"/><rect x="322.7" y="307.7" width="8.5" height="11.5"/><path d="M335,285.8 H338.2 V326.5 H298.1 V323.2 H335 Z"/><path d="M312.6,285.6 H320.4 L317.6,288.4 L331.9,302.7 L330.3,304.3 L316,290 L313,293 Z"/></g><g fill="#565656"><circle cx="423.2" cy="293.2" r="3.2"/><path d="M420.6,299.4 Q420.6,297.6 422.4,297.6 H424.4 Q425.8,297.6 426.6,298.6 L428.2,300 H432.2 Q433,300 433,300.8 Q433,301.6 432.2,301.6 H427.6 L426.8,301.2 V307.6 H431 Q432.3,307.6 432.3,308.9 V319.4 H429.8 V310.9 H422.4 Q420.6,310.9 420.6,309.1 Z"/><path d="M417,299.8 H418.9 V312.2 H426.8 V314.3 H424.5 V318.2 H425.9 V320.3 H419.1 V318.2 H422 V314.3 H417 Z"/><g transform="translate(878.2,0) scale(-1,1)"><circle cx="423.2" cy="293.2" r="3.2"/><path d="M420.6,299.4 Q420.6,297.6 422.4,297.6 H424.4 Q425.8,297.6 426.6,298.6 L428.2,300 H432.2 Q433,300 433,300.8 Q433,301.6 432.2,301.6 H427.6 L426.8,301.2 V307.6 H431 Q432.3,307.6 432.3,308.9 V319.4 H429.8 V310.9 H422.4 Q420.6,310.9 420.6,309.1 Z"/><path d="M417,299.8 H418.9 V312.2 H426.8 V314.3 H424.5 V318.2 H425.9 V320.3 H419.1 V318.2 H422 V314.3 H417 Z"/></g><path d="M428,303.3 H450.4 V305.2 H440.4 V318.2 H443.4 V320.3 H434.8 V318.2 H437.8 V305.2 H428 Z"/></g><g fill="#565656"><circle cx="560.3" cy="276.9" r="4.5"/><path d="M550.4,290 Q550.4,282.8 558,282.8 H562.6 Q570.2,282.8 570.2,290 Z"/><path d="M546.2,292 H574.1 V293.6 L571.6,299.2 H568.2 L566.6,322.2 H569.8 V324.5 H551 V322.2 H554.2 L552.6,299.2 H548.8 L546.2,293.6 Z"/></g><g fill="#565656"><polygon points="298.59,420.94 304.22,424.69 298.44,435.47 292.66,431.56"/><polygon points="336.88,420.94 342.81,431.72 337.19,435.47 331.41,424.69"/><polygon points="305.78,426.09 315.00,427.50 317.50,426.09 330.31,426.09 335.47,436.25 331.56,439.69 330.31,443.44 326.88,445.00 324.69,448.12 321.56,449.06 316.88,448.12 302.81,437.50 300.62,435.47"/></g><g stroke="#565656" stroke-width="3.1" stroke-linecap="round" fill="none"><path d="M309.06,437.34 L304.69,441.09 M312.50,440.47 L308.28,444.22 M315.94,443.59 L311.88,447.19 M319.69,446.56 L315.78,449.84"/></g><g stroke="#f1f1f1" stroke-width="0.9" fill="none" stroke-linecap="round" stroke-linejoin="round"><path d="M316.88,426.88 L310.94,431.88 L314.38,436.41 L321.56,431.09 L330.94,440.31"/><path d="M306.88,442.81 L310.94,438.91 M310.31,445.94 L314.38,442.03 M313.91,448.75 L317.81,445.00" stroke-width="0.8"/></g><path d="M443.54,409.47 L444.03,407.13 L447.57,407.13 L448.06,409.47 L450.87,410.63 L452.87,409.33 L455.37,411.83 L454.07,413.83 L455.23,416.64 L457.57,417.13 L457.57,420.67 L455.23,421.16 L454.07,423.97 L455.37,425.97 L452.87,428.47 L450.87,427.17 L448.06,428.33 L447.57,430.67 L444.03,430.67 L443.54,428.33 L440.73,427.17 L438.73,428.47 L436.23,425.97 L437.53,423.97 L436.37,421.16 L434.03,420.67 L434.03,417.13 L436.37,416.64 L437.53,413.83 L436.23,411.83 L438.73,409.33 L440.73,410.63 Z M450.60,418.90 A4.8,4.8 0 1 0 441.00,418.90 A4.8,4.8 0 1 0 450.60,418.90 Z" fill="#565656" fill-rule="evenodd" stroke="#565656" stroke-width="1.4" stroke-linejoin="round"/><path d="M430.24,430.87 L430.73,428.53 L434.27,428.53 L434.76,430.87 L437.57,432.03 L439.57,430.73 L442.07,433.23 L440.77,435.23 L441.93,438.04 L444.27,438.53 L444.27,442.07 L441.93,442.56 L440.77,445.37 L442.07,447.37 L439.57,449.87 L437.57,448.57 L434.76,449.73 L434.27,452.07 L430.73,452.07 L430.24,449.73 L427.43,448.57 L425.43,449.87 L422.93,447.37 L424.23,445.37 L423.07,442.56 L420.73,442.07 L420.73,438.53 L423.07,438.04 L424.23,435.23 L422.93,433.23 L425.43,430.73 L427.43,432.03 Z M437.30,440.30 A4.8,4.8 0 1 0 427.70,440.30 A4.8,4.8 0 1 0 437.30,440.30 Z" fill="#565656" fill-rule="evenodd" stroke="#565656" stroke-width="1.4" stroke-linejoin="round"/><g fill="none" stroke="#565656" stroke-linecap="butt"><path d="M554.2,441.6 H566.4 V440 C566.6,436 573.2,433.6 573.2,427.4 A12.9,12.9 0 1 0 547.4,427.4 C547.4,433.6 554,436 554.2,440 Z" stroke-width="3" stroke-linejoin="round"/><path d="M553.8,447.6 H566.8" stroke-width="2.8"/><path d="M556.8,453 H563.8" stroke-width="2.6" stroke-linecap="round"/><path d="M560.3,404.8 V411.2 M536.9,427.5 H543.2 M577.4,427.5 H583.6 M543.6,411.9 L548,416.3 M577,411.9 L572.6,416.3 M543.6,443.1 L548,438.9 M577,443.1 L572.6,438.9" stroke-width="1.9"/></g><g fill="none" stroke="#0a0a0a" stroke-width="4.8" stroke-linecap="round" stroke-linejoin="round"><path d="M693.6,243.6 C694.4,269.5 676.4,294.7 629,298"/><circle cx="666.4" cy="271.4" r="9.6"/><path d="M641.2,288.2 L627.6,298 L638.8,308.6"/></g><circle cx="930.1" cy="173" r="18.7" fill="#c55a38"/><path d="M930.1,173 V154.3 A18.7,18.7 0 0 1 948.8,173 Z" fill="#f09273"/><path d="M930.1,173 V154.3 A18.7,18.7 0 0 0 911.4,173 Z" fill="#d9694a"/><rect x="915.4" y="163.6" width="15.4" height="21.4" rx="1.6" fill="#8a3018" opacity="0.45"/><rect x="908.5" y="162.5" width="21" height="20.8" rx="1.8" fill="#c14b2c"/><circle cx="693.8" cy="319" r="2.1" fill="#161616"/><circle cx="693.8" cy="438.6" r="2.1" fill="#161616"/></svg><span class="t " style="left:256.20px;top:174.00px;font-size:33.8px;font-weight:700;color:#1c3899;transform:scaleX(0.8877);-webkit-text-stroke:1.1px #1c3899;">KEY POINTS SUMMARY</span><span class="t " style="left:283.60px;top:341.00px;font-size:13px;font-weight:700;color:#1c3899;transform:scaleX(0.9435);-webkit-text-stroke:0.35px #1c3899;">Key Point 1</span><span class="t " style="left:404.80px;top:341.00px;font-size:13px;font-weight:700;color:#1c3899;transform:scaleX(0.9548);-webkit-text-stroke:0.35px #1c3899;">Key Point 2</span><span class="t " style="left:525.80px;top:341.00px;font-size:13px;font-weight:700;color:#1c3899;transform:scaleX(0.9605);-webkit-text-stroke:0.35px #1c3899;">Key Point 3</span><span class="t " style="left:283.80px;top:462.00px;font-size:13px;font-weight:700;color:#1c3899;transform:scaleX(0.9548);-webkit-text-stroke:0.35px #1c3899;">Key Point 4</span><span class="t " style="left:404.60px;top:462.00px;font-size:13px;font-weight:700;color:#1c3899;transform:scaleX(0.9520);-webkit-text-stroke:0.35px #1c3899;">Key Point 5</span><span class="t " style="left:525.80px;top:462.00px;font-size:13px;font-weight:700;color:#1c3899;transform:scaleX(0.9605);-webkit-text-stroke:0.35px #1c3899;">Key Point 6</span><div style="position:absolute;left:640.6px;top:164.6px;width:183px;height:66.4px;box-sizing:border-box;border:3px solid #4292cc;border-radius:10px;background:#fff;box-shadow:1.5px 1.5px 3px rgba(0,0,0,0.35)"></div><span class="t " style="left:673.80px;top:172.00px;font-size:23.2px;font-weight:700;color:#0a0a0a;transform:scaleX(0.9729);-webkit-text-stroke:0.45px #0a0a0a;">Key Points</span><span class="t " style="left:695.60px;top:202.00px;font-size:23.2px;font-weight:700;color:#0a0a0a;transform:scaleX(0.9763);-webkit-text-stroke:0.45px #0a0a0a;">Listing</span><span class="t " style="left:914.40px;top:167.00px;font-size:14px;font-weight:700;color:#fff;transform:scaleX(0.9632);">P</span><div style="position:absolute;left:712px;top:327.8px;width:218px;height:22.8px;background:#ffff54"></div><div style="position:absolute;left:712px;top:350.4px;width:54.4px;height:20.8px;background:#ffff54"></div><span class="t " style="left:712.40px;top:312.00px;font-size:14.5px;font-weight:400;color:#161616;transform:scaleX(1.0316);-webkit-text-stroke:0.22px #161616;">End each section with a</span><span class="t " style="left:712.40px;top:331.00px;font-size:17.6px;font-weight:700;color:#1c3899;-webkit-text-stroke:0.3px #1c3899;">summary slide listing key</span><span class="t " style="left:712.40px;top:352.00px;font-size:17.6px;font-weight:700;color:#1c3899;transform:scaleX(0.9947);-webkit-text-stroke:0.3px #1c3899;">points</span><span class="t " style="left:765.40px;top:354.00px;font-size:14.5px;font-weight:400;color:#1c3899;">.</span><span class="t " style="left:774.20px;top:354.00px;font-size:14.5px;font-weight:400;color:#161616;transform:scaleX(1.0179);-webkit-text-stroke:0.22px #161616;">This reinforces</span><span class="t " style="left:712.40px;top:375.00px;font-size:14.5px;font-weight:400;color:#161616;transform:scaleX(1.0414);-webkit-text-stroke:0.22px #161616;">understanding and aids</span><span class="t " style="left:712.40px;top:396.00px;font-size:14.5px;font-weight:400;color:#161616;transform:scaleX(1.0419);-webkit-text-stroke:0.22px #161616;">retention.</span><span class="t " style="left:712.40px;top:431.00px;font-size:14.5px;font-weight:400;color:#161616;transform:scaleX(1.0390);-webkit-text-stroke:0.22px #161616;">Add icons to make summaries</span><span class="t " style="left:712.40px;top:453.00px;font-size:14.5px;font-weight:400;color:#161616;transform:scaleX(1.0152);-webkit-text-stroke:0.22px #161616;">more visually engaging and easy</span><span class="t " style="left:712.40px;top:473.00px;font-size:14.5px;font-weight:400;color:#161616;transform:scaleX(1.0398);-webkit-text-stroke:0.22px #161616;">to scan.</span></div><svg class="ov" viewBox="0 0 1024 640"><path d="M31.6,493.9 A2.9250000000000007,2.9250000000000007 0 0 0 28.675,496.825 V509.0 A2.9250000000000007,2.9250000000000007 0 0 1 25.75,511.925 A2.9250000000000007,2.9250000000000007 0 0 1 28.675,514.85 V527.0250000000001 A2.9250000000000007,2.9250000000000007 0 0 0 31.6,529.95" fill="none" stroke="#5570c0" stroke-width="0.45"/><path d="M78.55,493.9 A2.9750000000000014,2.9750000000000014 0 0 1 81.525,496.875 V508.95 A2.9750000000000014,2.9750000000000014 0 0 0 84.5,511.925 A2.9750000000000014,2.9750000000000014 0 0 0 81.525,514.9 V526.975 A2.9750000000000014,2.9750000000000014 0 0 1 78.55,529.95" fill="none" stroke="#5570c0" stroke-width="0.45"/><g transform="translate(22.0,474.9) scale(0.15057) translate(-218.2,-135.9)" fill="none" stroke="#0a0a0a" stroke-width="6.4" stroke-linecap="round" stroke-linejoin="round"><path d="M693.6,243.6 C694.4,269.5 676.4,294.7 629,298"/><circle cx="666.4" cy="271.4" r="9.6"/><path d="M641.2,288.2 L627.6,298 L638.8,308.6"/></g></svg><div style="position:absolute;left:19.9px;top:473px;width:117.3px;height:67.4px;box-sizing:border-box;border:2px solid #d6775b;border-radius:4.5px"></div><div style="position:absolute;left:151.3px;top:300.2px;width:5.8px;height:320.4px;border-radius:3px;background:#a0746f"></div></div></div>
<div id="slide"><svg width="751" height="423" viewBox="0 0 751 423" style="position:absolute;left:0;top:0;opacity:0.024"><filter id="lt" x="0" y="0" width="100%" height="100%"><feTurbulence type="fractalNoise" baseFrequency="0.3 0.22" numOctaves="2" seed="7"/><feColorMatrix type="matrix" values="0 0 0 0 0  0 0 0 0 0  0 0 0 0 0  1.6 0 0 0 -0.4"/></filter><rect width="751" height="423" filter="url(#lt)"/></svg></div>
<svg class="ov" viewBox="0 0 1024 640"><path d="M282,262.2 A19.6,20 0 0 0 262.4,282.2 V361.6 A19.4,20 0 0 1 243,381.6 A19.4,20 0 0 1 262.4,401.6 V481.6 A19.6,20 0 0 0 282,501.6" fill="none" stroke="#3553ae" stroke-width="1"/><path d="M593.8,262.2 A19.8,20 0 0 1 613.6,282.2 V361.6 A19.6,20 0 0 0 633.2,381.6 A19.6,20 0 0 0 613.6,401.6 V481.6 A19.8,20 0 0 1 593.8,501.6" fill="none" stroke="#3553ae" stroke-width="1"/><g fill="#565656"><rect x="298.1" y="285.8" width="8.7" height="33.4"/><rect x="310.5" y="297.4" width="8.5" height="21.8"/><rect x="322.7" y="307.7" width="8.5" height="11.5"/><path d="M335,285.8 H338.2 V326.5 H298.1 V323.2 H335 Z"/><path d="M312.6,285.6 H320.4 L317.6,288.4 L331.9,302.7 L330.3,304.3 L316,290 L313,293 Z"/></g><g fill="#565656"><circle cx="423.2" cy="293.2" r="3.2"/><path d="M420.6,299.4 Q420.6,297.6 422.4,297.6 H424.4 Q425.8,297.6 426.6,298.6 L428.2,300 H432.2 Q433,300 433,300.8 Q433,301.6 432.2,301.6 H427.6 L426.8,301.2 V307.6 H431 Q432.3,307.6 432.3,308.9 V319.4 H429.8 V310.9 H422.4 Q420.6,310.9 420.6,309.1 Z"/><path d="M417,299.8 H418.9 V312.2 H426.8 V314.3 H424.5 V318.2 H425.9 V320.3 H419.1 V318.2 H422 V314.3 H417 Z"/><g transform="translate(878.2,0) scale(-1,1)"><circle cx="423.2" cy="293.2" r="3.2"/><path d="M420.6,299.4 Q420.6,297.6 422.4,297.6 H424.4 Q425.8,297.6 426.6,298.6 L428.2,300 H432.2 Q433,300 433,300.8 Q433,301.6 432.2,301.6 H427.6 L426.8,301.2 V307.6 H431 Q432.3,307.6 432.3,308.9 V319.4 H429.8 V310.9 H422.4 Q420.6,310.9 420.6,309.1 Z"/><path d="M417,299.8 H418.9 V312.2 H426.8 V314.3 H424.5 V318.2 H425.9 V320.3 H419.1 V318.2 H422 V314.3 H417 Z"/></g><path d="M428,303.3 H450.4 V305.2 H440.4 V318.2 H443.4 V320.3 H434.8 V318.2 H437.8 V305.2 H428 Z"/></g><g fill="#565656"><circle cx="560.3" cy="276.9" r="4.5"/><path d="M550.4,290 Q550.4,282.8 558,282.8 H562.6 Q570.2,282.8 570.2,290 Z"/><path d="M546.2,292 H574.1 V293.6 L571.6,299.2 H568.2 L566.6,322.2 H569.8 V324.5 H551 V322.2 H554.2 L552.6,299.2 H548.8 L546.2,293.6 Z"/></g><g fill="#565656"><polygon points="298.59,420.94 304.22,424.69 298.44,435.47 292.66,431.56"/><polygon points="336.88,420.94 342.81,431.72 337.19,435.47 331.41,424.69"/><polygon points="305.78,426.09 315.00,427.50 317.50,426.09 330.31,426.09 335.47,436.25 331.56,439.69 330.31,443.44 326.88,445.00 324.69,448.12 321.56,449.06 316.88,448.12 302.81,437.50 300.62,435.47"/></g><g stroke="#565656" stroke-width="3.1" stroke-linecap="round" fill="none"><path d="M309.06,437.34 L304.69,441.09 M312.50,440.47 L308.28,444.22 M315.94,443.59 L311.88,447.19 M319.69,446.56 L315.78,449.84"/></g><g stroke="#f1f1f1" stroke-width="0.9" fill="none" stroke-linecap="round" stroke-linejoin="round"><path d="M316.88,426.88 L310.94,431.88 L314.38,436.41 L321.56,431.09 L330.94,440.31"/><path d="M306.88,442.81 L310.94,438.91 M310.31,445.94 L314.38,442.03 M313.91,448.75 L317.81,445.00" stroke-width="0.8"/></g><path d="M443.54,409.47 L444.03,407.13 L447.57,407.13 L448.06,409.47 L450.87,410.63 L452.87,409.33 L455.37,411.83 L454.07,413.83 L455.23,416.64 L457.57,417.13 L457.57,420.67 L455.23,421.16 L454.07,423.97 L455.37,425.97 L452.87,428.47 L450.87,427.17 L448.06,428.33 L447.57,430.67 L444.03,430.67 L443.54,428.33 L440.73,427.17 L438.73,428.47 L436.23,425.97 L437.53,423.97 L436.37,421.16 L434.03,420.67 L434.03,417.13 L436.37,416.64 L437.53,413.83 L436.23,411.83 L438.73,409.33 L440.73,410.63 Z M450.60,418.90 A4.8,4.8 0 1 0 441.00,418.90 A4.8,4.8 0 1 0 450.60,418.90 Z" fill="#565656" fill-rule="evenodd" stroke="#565656" stroke-width="1.4" stroke-linejoin="round"/><path d="M430.24,430.87 L430.73,428.53 L434.27,428.53 L434.76,430.87 L437.57,432.03 L439.57,430.73 L442.07,433.23 L440.77,435.23 L441.93,438.04 L444.27,438.53 L444.27,442.07 L441.93,442.56 L440.77,445.37 L442.07,447.37 L439.57,449.87 L437.57,448.57 L434.76,449.73 L434.27,452.07 L430.73,452.07 L430.24,449.73 L427.43,448.57 L425.43,449.87 L422.93,447.37 L424.23,445.37 L423.07,442.56 L420.73,442.07 L420.73,438.53 L423.07,438.04 L424.23,435.23 L422.93,433.23 L425.43,430.73 L427.43,432.03 Z M437.30,440.30 A4.8,4.8 0 1 0 427.70,440.30 A4.8,4.8 0 1 0 437.30,440.30 Z" fill="#565656" fill-rule="evenodd" stroke="#565656" stroke-width="1.4" stroke-linejoin="round"/><g fill="none" stroke="#565656" stroke-linecap="butt"><path d="M554.2,441.6 H566.4 V440 C566.6,436 573.2,433.6 573.2,427.4 A12.9,12.9 0 1 0 547.4,427.4 C547.4,433.6 554,436 554.2,440 Z" stroke-width="3" stroke-linejoin="round"/><path d="M553.8,447.6 H566.8" stroke-width="2.8"/><path d="M556.8,453 H563.8" stroke-width="2.6" stroke-linecap="round"/><path d="M560.3,404.8 V411.2 M536.9,427.5 H543.2 M577.4,427.5 H583.6 M543.6,411.9 L548,416.3 M577,411.9 L572.6,416.3 M543.6,443.1 L548,438.9 M577,443.1 L572.6,438.9" stroke-width="1.9"/></g><g fill="none" stroke="#0a0a0a" stroke-width="4.8" stroke-linecap="round" stroke-linejoin="round"><path d="M693.6,243.6 C694.4,269.5 676.4,294.7 629,298"/><circle cx="666.4" cy="271.4" r="9.6"/><path d="M641.2,288.2 L627.6,298 L638.8,308.6"/></g><circle cx="930.1" cy="173" r="18.7" fill="#c55a38"/><path d="M930.1,173 V154.3 A18.7,18.7 0 0 1 948.8,173 Z" fill="#f09273"/><path d="M930.1,173 V154.3 A18.7,18.7 0 0 0 911.4,173 Z" fill="#d9694a"/><rect x="915.4" y="163.6" width="15.4" height="21.4" rx="1.6" fill="#8a3018" opacity="0.45"/><rect x="908.5" y="162.5" width="21" height="20.8" rx="1.8" fill="#c14b2c"/><circle cx="693.8" cy="319" r="2.1" fill="#161616"/><circle cx="693.8" cy="438.6" r="2.1" fill="#161616"/></svg>
<span class="t " style="left:256.20px;top:174.00px;font-size:33.8px;font-weight:700;color:#1c3899;transform:scaleX(0.8877);-webkit-text-stroke:1.1px #1c3899;">KEY POINTS SUMMARY</span><span class="t " style="left:283.60px;top:341.00px;font-size:13px;font-weight:700;color:#1c3899;transform:scaleX(0.9435);-webkit-text-stroke:0.35px #1c3899;">Key Point 1</span><span class="t " style="left:404.80px;top:341.00px;font-size:13px;font-weight:700;color:#1c3899;transform:scaleX(0.9548);-webkit-text-stroke:0.35px #1c3899;">Key Point 2</span><span class="t " style="left:525.80px;top:341.00px;font-size:13px;font-weight:700;color:#1c3899;transform:scaleX(0.9605);-webkit-text-stroke:0.35px #1c3899;">Key Point 3</span><span class="t " style="left:283.80px;top:462.00px;font-size:13px;font-weight:700;color:#1c3899;transform:scaleX(0.9548);-webkit-text-stroke:0.35px #1c3899;">Key Point 4</span><span class="t " style="left:404.60px;top:462.00px;font-size:13px;font-weight:700;color:#1c3899;transform:scaleX(0.9520);-webkit-text-stroke:0.35px #1c3899;">Key Point 5</span><span class="t " style="left:525.80px;top:462.00px;font-size:13px;font-weight:700;color:#1c3899;transform:scaleX(0.9605);-webkit-text-stroke:0.35px #1c3899;">Key Point 6</span><div style="position:absolute;left:640.6px;top:164.6px;width:183px;height:66.4px;box-sizing:border-box;border:3px solid #4292cc;border-radius:10px;background:#fff;box-shadow:1.5px 1.5px 3px rgba(0,0,0,0.35)"></div><span class="t " style="left:673.80px;top:172.00px;font-size:23.2px;font-weight:700;color:#0a0a0a;transform:scaleX(0.9729);-webkit-text-stroke:0.45px #0a0a0a;">Key Points</span><span class="t " style="left:695.60px;top:202.00px;font-size:23.2px;font-weight:700;color:#0a0a0a;transform:scaleX(0.9763);-webkit-text-stroke:0.45px #0a0a0a;">Listing</span><span class="t " style="left:914.40px;top:167.00px;font-size:14px;font-weight:700;color:#fff;transform:scaleX(0.9632);">P</span><div style="position:absolute;left:712px;top:327.8px;width:218px;height:22.8px;background:#ffff54"></div><div style="position:absolute;left:712px;top:350.4px;width:54.4px;height:20.8px;background:#ffff54"></div><span class="t " style="left:712.40px;top:312.00px;font-size:14.5px;font-weight:400;color:#161616;transform:scaleX(1.0316);-webkit-text-stroke:0.22px #161616;">End each section with a</span><span class="t " style="left:712.40px;top:331.00px;font-size:17.6px;font-weight:700;color:#1c3899;-webkit-text-stroke:0.3px #1c3899;">summary slide listing key</span><span class="t " style="left:712.40px;top:352.00px;font-size:17.6px;font-weight:700;color:#1c3899;transform:scaleX(0.9947);-webkit-text-stroke:0.3px #1c3899;">points</span><span class="t " style="left:765.40px;top:354.00px;font-size:14.5px;font-weight:400;color:#1c3899;">.</span><span class="t " style="left:774.20px;top:354.00px;font-size:14.5px;font-weight:400;color:#161616;transform:scaleX(1.0179);-webkit-text-stroke:0.22px #161616;">This reinforces</span><span class="t " style="left:712.40px;top:375.00px;font-size:14.5px;font-weight:400;color:#161616;transform:scaleX(1.0414);-webkit-text-stroke:0.22px #161616;">understanding and aids</span><span class="t " style="left:712.40px;top:396.00px;font-size:14.5px;font-weight:400;color:#161616;transform:scaleX(1.0419);-webkit-text-stroke:0.22px #161616;">retention.</span><span class="t " style="left:712.40px;top:431.00px;font-size:14.5px;font-weight:400;color:#161616;transform:scaleX(1.0390);-webkit-text-stroke:0.22px #161616;">Add icons to make summaries</span><span class="t " style="left:712.40px;top:453.00px;font-size:14.5px;font-weight:400;color:#161616;transform:scaleX(1.0152);-webkit-text-stroke:0.22px #161616;">more visually engaging and easy</span><span class="t " style="left:712.40px;top:473.00px;font-size:14.5px;font-weight:400;color:#161616;transform:scaleX(1.0398);-webkit-text-stroke:0.22px #161616;">to scan.</span>
<span class="t " style="left:15.00px;top:9.00px;font-size:9.5px;font-weight:400;color:#d6d6d6;transform:scaleX(0.8495);">AutoSave</span><div style="position:absolute;left:57px;top:9px;width:21px;height:11px;border-radius:6px;background:#1c1c1c"></div><div style="position:absolute;left:57.5px;top:9.5px;width:10px;height:10px;border-radius:5px;background:#f2f2f2"></div><div style="position:absolute;left:795.5px;top:6.5px;width:197px;height:15px;border-radius:4px;background:#2c2c2c;border:0.5px solid #373737;box-sizing:border-box"></div><span class="t " style="left:447.50px;top:10.00px;font-size:9.5px;font-weight:400;color:#ececec;transform:scaleX(0.9126);-webkit-text-stroke:0.2px #ececec;">Presentation1</span><span class="t " style="left:504.50px;top:10.00px;font-size:9.5px;font-weight:400;color:#b4b4b4;transform:scaleX(0.9061);">— Saved to my Mac</span><span class="t " style="left:814.30px;top:11.00px;font-size:9.3px;font-weight:700;color:#a8a8a8;transform:scaleX(0.9582);">Search (Cmd + Ctrl + U)</span><span class="t " style="left:8.00px;top:33.00px;font-size:10.3px;font-weight:700;color:#f0f0f0;transform:scaleX(0.9263);">Home</span><span class="t " style="left:51.00px;top:33.00px;font-size:10.3px;font-weight:400;color:#e4e4e4;transform:scaleX(0.9897);-webkit-text-stroke:0.25px #e4e4e4;">Insert</span><span class="t " style="left:94.50px;top:33.00px;font-size:10.3px;font-weight:400;color:#e4e4e4;transform:scaleX(0.9363);-webkit-text-stroke:0.25px #e4e4e4;">Draw</span><span class="t " style="left:134.30px;top:33.00px;font-size:10.3px;font-weight:400;color:#e4e4e4;transform:scaleX(0.9575);-webkit-text-stroke:0.25px #e4e4e4;">Design</span><span class="t " style="left:183.30px;top:33.00px;font-size:10.3px;font-weight:400;color:#e4e4e4;transform:scaleX(0.9603);-webkit-text-stroke:0.25px #e4e4e4;">Transitions</span><span class="t " style="left:250.30px;top:33.00px;font-size:10.3px;font-weight:400;color:#e4e4e4;transform:scaleX(0.9757);-webkit-text-stroke:0.25px #e4e4e4;">Animations</span><span class="t " style="left:318.00px;top:33.00px;font-size:10.3px;font-weight:400;color:#e4e4e4;transform:scaleX(0.9512);-webkit-text-stroke:0.25px #e4e4e4;">Slide Show</span><span class="t " style="left:383.60px;top:33.00px;font-size:10.3px;font-weight:400;color:#e4e4e4;transform:scaleX(0.9457);-webkit-text-stroke:0.25px #e4e4e4;">Record</span><span class="t " style="left:432.00px;top:33.00px;font-size:10.3px;font-weight:400;color:#e4e4e4;transform:scaleX(0.9270);-webkit-text-stroke:0.25px #e4e4e4;">Review</span><span class="t " style="left:480.30px;top:33.00px;font-size:10.3px;font-weight:400;color:#e4e4e4;transform:scaleX(0.9575);-webkit-text-stroke:0.25px #e4e4e4;">View</span><div style="position:absolute;left:8px;top:45.2px;width:26.5px;height:1.6px;border-radius:1px;background:#f0f0f0"></div><div style="position:absolute;left:806.7px;top:30.2px;width:58px;height:16.3px;border-radius:4px;background:#575757"></div><div style="position:absolute;left:872px;top:30.2px;width:74.5px;height:16.3px;border-radius:4px;background:#575757"></div><div style="position:absolute;left:953.8px;top:30.2px;width:63.3px;height:16.3px;border-radius:4px;background:#c4562a"></div><span class="t " style="left:828.60px;top:34.00px;font-size:10px;font-weight:400;color:#f2f2f2;transform:scaleX(0.9302);-webkit-text-stroke:0.25px #f2f2f2;">Record</span><span class="t " style="left:894.20px;top:34.00px;font-size:10px;font-weight:400;color:#f2f2f2;transform:scaleX(0.9512);-webkit-text-stroke:0.25px #f2f2f2;">Comments</span><span class="t " style="left:975.60px;top:34.00px;font-size:10px;font-weight:700;color:#fff;transform:scaleX(0.8814);">Share</span><span class="t " style="left:14.50px;top:78.00px;font-size:9.6px;font-weight:400;color:#e6e6e6;transform:scaleX(0.7944);-webkit-text-stroke:0.2px #e6e6e6;">Paste</span><span class="t " style="left:90.80px;top:78.00px;font-size:9.6px;font-weight:400;color:#e6e6e6;transform:scaleX(0.8124);-webkit-text-stroke:0.2px #e6e6e6;">New</span><span class="t " style="left:89.60px;top:87.00px;font-size:9.6px;font-weight:400;color:#e6e6e6;transform:scaleX(0.8433);-webkit-text-stroke:0.2px #e6e6e6;">Slide</span><div style="position:absolute;left:156px;top:55px;width:122.4px;height:16.4px;border-radius:3px;background:#303030"></div><div style="position:absolute;left:280px;top:55px;width:38.8px;height:16.4px;border-radius:3px;background:#303030"></div><span class="t " style="left:160.60px;top:59.00px;font-size:9.6px;font-weight:400;color:#8c8c8c;transform:scaleX(0.9555);">Aptos (Body)</span><span class="t " style="left:285.00px;top:59.00px;font-size:9.6px;font-weight:400;color:#cfcfcf;transform:scaleX(0.9933);">32</span><span class="t " style="left:323.00px;top:58.00px;font-size:12.4px;font-weight:400;color:#7a7a7a;transform:scaleX(1.0163);">A</span><span class="t " style="left:342.60px;top:60.00px;font-size:10.4px;font-weight:400;color:#7a7a7a;transform:scaleX(1.0090);">A</span><span class="t " style="left:371.00px;top:57.00px;font-size:12.4px;font-weight:400;color:#7a7a7a;transform:scaleX(0.9921);">A</span><span class="t " style="left:162.60px;top:81.00px;font-size:10.2px;font-weight:400;color:#7a7a7a;transform:scaleX(0.8533);">B</span><span class="t " style="left:182.20px;top:81.00px;font-size:10.2px;font-weight:400;color:#7a7a7a;transform:scaleX(0.9143);font-style:italic;">I</span><span class="t " style="left:198.40px;top:81.00px;font-size:10.2px;font-weight:400;color:#7a7a7a;transform:scaleX(0.8968);">U</span><span class="t " style="left:216.20px;top:83.00px;font-size:7.6px;font-weight:400;color:#6a6a6a;transform:scaleX(0.9937);">ab</span><span class="t " style="left:236.80px;top:82.00px;font-size:9.6px;font-weight:400;color:#7a7a7a;transform:scaleX(1.0423);">x</span><span class="t " style="left:242.40px;top:81.00px;font-size:4.6px;font-weight:400;color:#4a6f9c;transform:scaleX(0.8585);">2</span><span class="t " style="left:255.00px;top:82.00px;font-size:9.6px;font-weight:400;color:#7a7a7a;transform:scaleX(1.0423);">x</span><span class="t " style="left:260.40px;top:90.00px;font-size:4.6px;font-weight:400;color:#4a6f9c;transform:scaleX(0.8585);">2</span><span class="t " style="left:270.60px;top:80.00px;font-size:8.6px;font-weight:400;color:#7a7a7a;transform:scaleX(0.9789);">AV</span><span class="t " style="left:297.60px;top:82.00px;font-size:10px;font-weight:400;color:#7a7a7a;transform:scaleX(0.9808);">Aa</span><span class="t " style="left:363.60px;top:79.00px;font-size:11px;font-weight:400;color:#8a8a8a;transform:scaleX(1.0621);">A</span><span class="t " style="left:578.40px;top:78.00px;font-size:9.4px;font-weight:400;color:#9a9a9a;transform:scaleX(0.8786);">Convert to</span><span class="t " style="left:580.60px;top:87.00px;font-size:9.4px;font-weight:400;color:#9a9a9a;transform:scaleX(0.9031);">SmartArt</span><span class="t " style="left:492.80px;top:81.00px;font-size:6.6px;font-weight:400;color:#4a78b8;transform:scaleX(1.0894);">A</span><span class="t " style="left:637.00px;top:78.00px;font-size:9.6px;font-weight:400;color:#e6e6e6;transform:scaleX(0.8239);-webkit-text-stroke:0.2px #e6e6e6;">Picture</span><span class="t " style="left:674.00px;top:83.00px;font-size:7px;font-weight:700;color:#4f8fe0;transform:scaleX(0.9481);">A</span><span class="t " style="left:710.60px;top:78.00px;font-size:9.6px;font-weight:400;color:#e6e6e6;transform:scaleX(0.8084);-webkit-text-stroke:0.2px #e6e6e6;">Arrange</span><span class="t " style="left:750.20px;top:78.00px;font-size:9.6px;font-weight:400;color:#9a9a9a;transform:scaleX(0.8316);">Quick</span><span class="t " style="left:749.80px;top:87.00px;font-size:9.6px;font-weight:400;color:#9a9a9a;transform:scaleX(0.8186);">Styles</span><span class="t " style="left:822.00px;top:78.00px;font-size:9.6px;font-weight:400;color:#e6e6e6;transform:scaleX(0.8423);-webkit-text-stroke:0.2px #e6e6e6;">Add-ins</span><span class="t " style="left:867.40px;top:78.00px;font-size:9.6px;font-weight:400;color:#e6e6e6;transform:scaleX(0.8228);-webkit-text-stroke:0.2px #e6e6e6;">Designer</span><span class="t " style="left:918.00px;top:78.00px;font-size:9.6px;font-weight:400;color:#e6e6e6;transform:scaleX(0.8153);-webkit-text-stroke:0.2px #e6e6e6;">Haiku</span><span class="t " style="left:919.40px;top:87.00px;font-size:9.6px;font-weight:400;color:#e6e6e6;transform:scaleX(0.8051);-webkit-text-stroke:0.2px #e6e6e6;">Deck</span><span class="t " style="left:958.20px;top:78.00px;font-size:9.6px;font-weight:400;color:#e6e6e6;transform:scaleX(0.8569);-webkit-text-stroke:0.2px #e6e6e6;">Autopilot</span>
<div style="position:absolute;left:162.9px;top:592.1px;width:862px;height:1.1px;background:#151515"></div><div style="position:absolute;left:0;top:622.8px;width:1024px;height:17.2px;background:#383838"></div><div style="position:absolute;left:748.2px;top:622.8px;width:25.7px;height:17.2px;background:#4d4d4d"></div><span class="t " style="left:167.80px;top:600.00px;font-size:9.6px;font-weight:400;color:#ececec;transform:scaleX(0.9650);">Click to add notes</span><span class="t " style="left:17.20px;top:627.00px;font-size:9.6px;font-weight:400;color:#dcdcdc;transform:scaleX(0.9039);">Slide 10 of 11</span><span class="t " style="left:84.20px;top:627.00px;font-size:9.6px;font-weight:400;color:#dcdcdc;transform:scaleX(0.9376);">English (United States)</span><span class="t " style="left:205.20px;top:627.00px;font-size:9.6px;font-weight:400;color:#dcdcdc;transform:scaleX(0.9482);">Accessibility: Investigate</span><span class="t " style="left:646.00px;top:627.00px;font-size:9.4px;font-weight:400;color:#dcdcdc;transform:scaleX(0.9551);">Notes</span><span class="t " style="left:697.80px;top:627.00px;font-size:9.4px;font-weight:400;color:#dcdcdc;transform:scaleX(0.9486);">Comments</span><span class="t " style="left:961.80px;top:627.00px;font-size:9.4px;font-weight:400;color:#dcdcdc;transform:scaleX(0.8848);">110%</span>
<svg class="ov" viewBox="0 0 1024 640"><path d="M86.5,14.2 L91.5,9 L96.5,14.2 V19.5 H93.3 V15.6 H89.7 V19.5 H86.5 Z" fill="none" stroke="#ddd" stroke-width="1.1" stroke-linejoin="round"/><path d="M106,9 H113.5 L116,11.5 V19.5 H106 Z" fill="none" stroke="#ddd" stroke-width="1.1" stroke-linejoin="round"/><path d="M108.3,9 V12.3 H113 V9 M108,19.5 V15.4 H114 V19.5" fill="none" stroke="#ddd" stroke-width="1"/><path d="M126,9 V13.2 H130.3" fill="none" stroke="#ddd" stroke-width="1.2" stroke-linecap="round" stroke-linejoin="round"/><path d="M126.3,13 C128.5,9.8 133,9.3 134.6,12.2 C136,15 133,17.6 129.2,20" fill="none" stroke="#ddd" stroke-width="1.2" stroke-linecap="round"/><path d="M141.3,13.2 L143.5,15.8 L145.7,13.2" fill="none" stroke="#ccc" stroke-width="1.2" stroke-linecap="round" stroke-linejoin="round"/><path d="M161.6,10.3 A4.7,4.7 0 1 0 163.3,14.5" fill="none" stroke="#666" stroke-width="1.1" stroke-linecap="round"/><path d="M162.3,8.2 V11 H159.5" fill="none" stroke="#666" stroke-width="1.1" stroke-linecap="round" stroke-linejoin="round"/><circle cx="174.3" cy="14.5" r="0.9" fill="#ddd"/><circle cx="177.8" cy="14.5" r="0.9" fill="#ddd"/><circle cx="181.3" cy="14.5" r="0.9" fill="#ddd"/><path d="M436,8.8 H441 L443.6,11.4 V19.2 H436 Z" fill="#f3f0ee"/><circle cx="440.2" cy="14.4" r="2.2" fill="#ed6c47" opacity="0.8"/><rect x="434.2" y="11.8" width="4.6" height="5" rx="0.8" fill="#c43e1c"/><path d="M586.9,13.4 L589.0,15.8 L591.1,13.4" fill="none" stroke="#aaa" stroke-width="1" stroke-linecap="round" stroke-linejoin="round"/><circle cx="803.3" cy="13.6" r="3.1" fill="none" stroke="#aaa" stroke-width="1"/><path d="M805.6,16 L808.3,18.8" stroke="#aaa" stroke-width="1.1" stroke-linecap="round"/><circle cx="1012.3" cy="11.2" r="2.5" fill="none" stroke="#ddd" stroke-width="1"/><circle cx="1007.3" cy="13" r="2" fill="none" stroke="#ddd" stroke-width="1"/><path d="M1004.2,19.6 C1004.2,16.8 1005.6,16 1007.6,16 C1009.6,16 1011,16.8 1011,19.6 Z" fill="none" stroke="#ddd" stroke-width="1" stroke-linejoin="round"/><path d="M1011.2,14.6 C1013.8,14.2 1016,15 1016,17.6 H1012" fill="none" stroke="#ddd" stroke-width="1" stroke-linecap="round"/><circle cx="818.8" cy="38.4" r="4.6" fill="none" stroke="#f2f2f2" stroke-width="1.1"/><circle cx="818.8" cy="38.4" r="2.9" fill="#f2f2f2"/><path d="M880.6,34 H888.6 Q889.8,34 889.8,35.2 V40.2 Q889.8,41.4 888.6,41.4 H884.3 L882,43.6 V41.4 H880.6 Q879.4,41.4 879.4,40.2 V35.2 Q879.4,34 880.6,34 Z" fill="none" stroke="#f2f2f2" stroke-width="1" stroke-linejoin="round"/><path d="M965.5,34.6 H962.6 Q961.4,34.6 961.4,35.8 V41.6 Q961.4,42.8 962.6,42.8 H968.6 Q969.8,42.8 969.8,41.6 V40.6" fill="none" stroke="#fff" stroke-width="1" stroke-linecap="round"/><path d="M964.2,40.4 C964.4,37.6 966,36.4 968,36.4 V34.2 L971.6,37.4 L968,40.4 V38.4 C966.4,38.3 965.2,38.8 964.2,40.4 Z" fill="none" stroke="#fff" stroke-width="0.9" stroke-linejoin="round"/><path d="M1007.2,37.4 L1009.3,39.8 L1011.4,37.4" fill="none" stroke="#fff" stroke-width="1" stroke-linecap="round" stroke-linejoin="round"/><path d="M17,58.2 H13.2 Q12.4,58.2 12.4,59 V74.2 Q12.4,75 13.2,75 H20.4 V63 H26.8 V59 Q26.8,58.2 26,58.2 H22.2" fill="none" stroke="#e8a33d" stroke-width="1.5" stroke-linejoin="round"/><path d="M16.6,59.6 V57.6 H18.2 Q18.4,55.4 19.6,55.4 Q20.8,55.4 21,57.6 H22.6 V59.6 Z" fill="none" stroke="#ddd" stroke-width="0.9" stroke-linejoin="round"/><rect x="21.6" y="63.6" width="10" height="12" rx="0.8" fill="#2b2b2b" stroke="#e0e0e0" stroke-width="1.1"/><path d="M34.8,63.8 L37.0,66.2 L39.2,63.8" fill="none" stroke="#ddd" stroke-width="1.2" stroke-linecap="round" stroke-linejoin="round"/><path d="M48.2,54.6 L52.6,62 M53.2,54.6 L48.8,62" stroke="#9a9a9a" stroke-width="0.9" stroke-linecap="round"/><circle cx="48.3" cy="63.4" r="1.3" fill="none" stroke="#5a84b8" stroke-width="0.8"/><circle cx="53.1" cy="63.4" r="1.3" fill="none" stroke="#5a84b8" stroke-width="0.8"/><path d="M49.5,70 H45.6 V78.4 H49.4" fill="none" stroke="#777" stroke-width="0.9"/><path d="M50,71.4 H54 L56.2,73.6 V80.2 H50 Z" fill="none" stroke="#777" stroke-width="0.9" stroke-linejoin="round"/><path d="M60.1,73.8 L62.3,76.2 L64.5,73.8" fill="none" stroke="#777" stroke-width="1.2" stroke-linecap="round" stroke-linejoin="round"/><path d="M55.8,85.2 L51.4,89.6 L53,91.2 Z" fill="#8a8a8a"/><path d="M50.4,89.4 L53.4,92.4 L50.6,95.2 Q48,94.6 45.6,91.6 Z" fill="#8a5a3c" stroke="#a77" stroke-width="0.5"/><rect x="73.6" y="52" width="0.8" height="43" fill="#444"/><rect x="84.6" y="57.6" width="19.6" height="14.4" rx="1" fill="none" stroke="#8c8c8c" stroke-width="1.3"/><path d="M84.6,62.4 H104 M94.6,62.4 V72" stroke="#8c8c8c" stroke-width="1.1"/><path d="M88.3,53.2 V63.6 M83.2,58.4 H93.6" stroke="#4caf50" stroke-width="1.2"/><path d="M109.1,63.8 L111.3,66.2 L113.5,63.8" fill="none" stroke="#ddd" stroke-width="1.2" stroke-linecap="round" stroke-linejoin="round"/><rect x="119.6" y="54.6" width="11" height="8.4" rx="0.6" fill="none" stroke="#9a9a9a" stroke-width="1.1"/><rect x="121.6" y="57" width="3" height="3.6" fill="#9a9a9a"/><rect x="125.6" y="57" width="3" height="3.6" fill="#9a9a9a"/><path d="M135.1,58.0 L137.3,60.5 L139.5,58.0" fill="none" stroke="#ddd" stroke-width="1.2" stroke-linecap="round" stroke-linejoin="round"/><rect x="119.6" y="70.2" width="11" height="8.6" rx="0.6" fill="none" stroke="#9a9a9a" stroke-width="1.1"/><rect x="124" y="73.4" width="5" height="3.8" fill="#777"/><path d="M120,71.6 C122,70 124.6,71 124.8,74" fill="none" stroke="#4f8fe0" stroke-width="1.1"/><path d="M119.4,69.6 V72.6 H122.4" fill="none" stroke="#4f8fe0" stroke-width="1.1"/><rect x="119.6" y="86" width="11" height="9.6" rx="0.6" fill="none" stroke="#9a9a9a" stroke-width="1.1"/><rect x="121.6" y="89.6" width="7" height="4.4" fill="none" stroke="#8a8a8a" stroke-width="0.9"/><rect x="119.4" y="84.2" width="11.4" height="1.4" fill="#5fae5f"/><path d="M135.1,89.5 L137.3,92.0 L139.5,89.5" fill="none" stroke="#ddd" stroke-width="1.2" stroke-linecap="round" stroke-linejoin="round"/><rect x="147.6" y="52" width="0.8" height="43" fill="#444"/><path d="M271.2,62.2 L273.4,64.8 L275.6,62.2" fill="none" stroke="#bbb" stroke-width="1.2" stroke-linecap="round" stroke-linejoin="round"/><path d="M311.0,62.2 L313.2,64.8 L315.4,62.2" fill="none" stroke="#bbb" stroke-width="1.2" stroke-linecap="round" stroke-linejoin="round"/><path d="M331.6,60 L332.8,58.8 L334,60" fill="none" stroke="#4a6f9c" stroke-width="0.8"/><path d="M349.8,59 L351,60.2 L352.2,59" fill="none" stroke="#4a6f9c" stroke-width="0.8"/><rect x="361.0" y="57" width="0.8" height="12.5" fill="#444"/><path d="M378.4,64.4 L381,61.8 L382.6,63.4 L380,66 Z" fill="none" stroke="#8a8a8a" stroke-width="0.8"/><rect x="392.0" y="52" width="0.8" height="43" fill="#444"/><rect x="198" y="90.6" width="7.2" height="0.7" fill="#7a7a7a"/><rect x="215" y="86.6" width="11" height="0.7" fill="#6a6a6a"/><path d="M270.6,90.2 H281.2 M272.2,88.8 L270.6,90.2 L272.2,91.6 M279.6,88.8 L281.2,90.2 L279.6,91.6" fill="none" stroke="#3f6ea8" stroke-width="0.8"/><path d="M286.0,84.8 L288.2,87.2 L290.4,84.8" fill="none" stroke="#8a8a8a" stroke-width="1.2" stroke-linecap="round" stroke-linejoin="round"/><path d="M313.8,84.8 L316.0,87.2 L318.2,84.8" fill="none" stroke="#8a8a8a" stroke-width="1.2" stroke-linecap="round" stroke-linejoin="round"/><rect x="325.8" y="80" width="0.8" height="12.5" fill="#444"/><path d="M337.4,87 L338.6,84.6 L343.6,80.2 L345.6,82 L340.6,86.6 L338.4,87.4 Z" fill="none" stroke="#8a8a8a" stroke-width="0.8" stroke-linejoin="round"/><rect x="335" y="88.8" width="11.6" height="2.8" fill="#c9c24a"/><path d="M351.1,84.8 L353.3,87.2 L355.5,84.8" fill="none" stroke="#8a8a8a" stroke-width="1.2" stroke-linecap="round" stroke-linejoin="round"/><rect x="362" y="89" width="11.6" height="2.8" fill="#4a78c2"/><path d="M378.2,84.8 L380.4,87.2 L382.6,84.8" fill="none" stroke="#8a8a8a" stroke-width="1.2" stroke-linecap="round" stroke-linejoin="round"/><rect x="402.4" y="57.6" width="1.6" height="1.6" fill="#3f6ea8"/><rect x="406" y="58.0" width="7.4" height="0.9" fill="#7a7a7a"/><rect x="429.6" y="57.4" width="0.8" height="2.4" fill="#3f6ea8"/><rect x="433" y="58.0" width="7.4" height="0.9" fill="#7a7a7a"/><rect x="402.4" y="62.0" width="1.6" height="1.6" fill="#3f6ea8"/><rect x="406" y="62.4" width="7.4" height="0.9" fill="#7a7a7a"/><rect x="429.6" y="61.8" width="0.8" height="2.4" fill="#3f6ea8"/><rect x="433" y="62.4" width="7.4" height="0.9" fill="#7a7a7a"/><rect x="402.4" y="66.4" width="1.6" height="1.6" fill="#3f6ea8"/><rect x="406" y="66.8" width="7.4" height="0.9" fill="#7a7a7a"/><rect x="429.6" y="66.2" width="0.8" height="2.4" fill="#3f6ea8"/><rect x="433" y="66.8" width="7.4" height="0.9" fill="#7a7a7a"/><path d="M418.6,62.4 L420.8,64.8 L423.0,62.4" fill="none" stroke="#8a8a8a" stroke-width="1.2" stroke-linecap="round" stroke-linejoin="round"/><path d="M445.8,62.4 L448.0,64.8 L450.2,62.4" fill="none" stroke="#8a8a8a" stroke-width="1.2" stroke-linecap="round" stroke-linejoin="round"/><rect x="458.0" y="57" width="0.8" height="12.5" fill="#444"/><rect x="467.6" y="57.95" width="10.399999999999977" height="0.9" fill="#7a7a7a"/><rect x="472.6" y="60.95" width="5.399999999999977" height="0.9" fill="#7a7a7a"/><rect x="472.6" y="63.95" width="5.399999999999977" height="0.9" fill="#7a7a7a"/><rect x="467.6" y="66.95" width="10.399999999999977" height="0.9" fill="#7a7a7a"/><rect x="486" y="57.95" width="10.399999999999977" height="0.9" fill="#7a7a7a"/><rect x="491" y="60.95" width="5.399999999999977" height="0.9" fill="#7a7a7a"/><rect x="491" y="63.95" width="5.399999999999977" height="0.9" fill="#7a7a7a"/><rect x="486" y="66.95" width="10.399999999999977" height="0.9" fill="#7a7a7a"/><path d="M471.6,63 H468 M469.4,61.6 L468,63 L469.4,64.4" fill="none" stroke="#3f6ea8" stroke-width="0.8"/><path d="M486.4,63 H490 M488.6,61.6 L490,63 L488.6,64.4" fill="none" stroke="#3f6ea8" stroke-width="0.8"/><rect x="505.8" y="57" width="0.8" height="12.5" fill="#444"/><rect x="519.6" y="57.95" width="6.7999999999999545" height="0.9" fill="#7a7a7a"/><rect x="519.6" y="60.95" width="6.7999999999999545" height="0.9" fill="#7a7a7a"/><rect x="519.6" y="63.95" width="6.7999999999999545" height="0.9" fill="#7a7a7a"/><rect x="519.6" y="66.95" width="6.7999999999999545" height="0.9" fill="#7a7a7a"/><path d="M516.4,58.4 V67.6 M515,60 L516.4,58.4 L517.8,60 M515,66 L516.4,67.6 L517.8,66" fill="none" stroke="#3f6ea8" stroke-width="0.8"/><path d="M531.2,62.4 L533.4,64.8 L535.6,62.4" fill="none" stroke="#8a8a8a" stroke-width="1.2" stroke-linecap="round" stroke-linejoin="round"/><rect x="543.4" y="57" width="0.8" height="12.5" fill="#444"/><rect x="554.2" y="60.4" width="3.8" height="0.9" fill="#3a5f8f"/><rect x="559.6" y="60.4" width="3.8" height="0.9" fill="#3a5f8f"/><rect x="554.2" y="62.6" width="3.8" height="0.9" fill="#3a5f8f"/><rect x="559.6" y="62.6" width="3.8" height="0.9" fill="#3a5f8f"/><rect x="554.2" y="64.8" width="3.8" height="0.9" fill="#3a5f8f"/><rect x="559.6" y="64.8" width="3.8" height="0.9" fill="#3a5f8f"/><path d="M568.8,62.4 L571.0,64.8 L573.2,62.4" fill="none" stroke="#8a8a8a" stroke-width="1.2" stroke-linecap="round" stroke-linejoin="round"/><path d="M582.4,57.4 H596 L600.6,63.6 L596,69.8 H582.4 L587,63.6 Z" fill="#3f6a43"/><rect x="590" y="64.4" width="12.6" height="8" rx="1" fill="#2b2b2b" stroke="#6a6a6a" stroke-width="0.9"/><rect x="592.4" y="66.80" width="7.800000000000068" height="0.8" fill="#5a5a5a"/><rect x="592.4" y="69.20" width="7.800000000000068" height="0.8" fill="#5a5a5a"/><path d="M607.4,63.8 L609.6,66.2 L611.8,63.8" fill="none" stroke="#777" stroke-width="1.2" stroke-linecap="round" stroke-linejoin="round"/><rect x="403.0" y="81.15" width="10.4" height="0.9" fill="#7a7a7a"/><rect x="403.0" y="84.15" width="7.0" height="0.9" fill="#7a7a7a"/><rect x="403.0" y="87.15" width="10.4" height="0.9" fill="#7a7a7a"/><rect x="403.0" y="90.15" width="7.0" height="0.9" fill="#7a7a7a"/><rect x="421.6" y="81.15" width="10.4" height="0.9" fill="#7a7a7a"/><rect x="423.3" y="84.15" width="7.0" height="0.9" fill="#7a7a7a"/><rect x="421.6" y="87.15" width="10.4" height="0.9" fill="#7a7a7a"/><rect x="423.3" y="90.15" width="7.0" height="0.9" fill="#7a7a7a"/><rect x="440.0" y="81.15" width="10.4" height="0.9" fill="#7a7a7a"/><rect x="443.4" y="84.15" width="7.0" height="0.9" fill="#7a7a7a"/><rect x="440.0" y="87.15" width="10.4" height="0.9" fill="#7a7a7a"/><rect x="443.4" y="90.15" width="7.0" height="0.9" fill="#7a7a7a"/><rect x="458.4" y="81.15" width="10.4" height="0.9" fill="#7a7a7a"/><rect x="458.4" y="84.15" width="10.4" height="0.9" fill="#7a7a7a"/><rect x="458.4" y="87.15" width="10.4" height="0.9" fill="#7a7a7a"/><rect x="458.4" y="90.15" width="10.4" height="0.9" fill="#7a7a7a"/><rect x="478.0" y="80" width="0.8" height="12.5" fill="#444"/><path d="M490.4,80.6 V91 M488.8,89.4 L490.4,91 L492,89.4 M495.4,86.4 V91 M493.8,89.4 L495.4,91 L497,89.4" fill="none" stroke="#8a8a8a" stroke-width="0.8"/><path d="M503.2,84.8 L505.4,87.2 L507.6,84.8" fill="none" stroke="#8a8a8a" stroke-width="1.2" stroke-linecap="round" stroke-linejoin="round"/><path d="M517.4,82 H514.6 V90.6 H517.4 M522.8,82 H525.6 V90.6 H522.8" fill="none" stroke="#8a8a8a" stroke-width="0.9"/><path d="M516.8,86.3 H523.4" stroke="#777" stroke-width="0.8"/><path d="M520.1,80.6 V84.4 M518.9,81.8 L520.1,80.6 L521.3,81.8 M520.1,92 V88.2 M518.9,90.8 L520.1,92 L521.3,90.8" fill="none" stroke="#3f6ea8" stroke-width="0.8"/><path d="M530.4,84.8 L532.6,87.2 L534.8,84.8" fill="none" stroke="#8a8a8a" stroke-width="1.2" stroke-linecap="round" stroke-linejoin="round"/><rect x="624.0" y="52" width="0.8" height="43" fill="#444"/><rect x="635.4" y="57.2" width="19.2" height="14.4" fill="#2b2b2b" stroke="#dcdcdc" stroke-width="1"/><path d="M636,71 L641.6,61.8 L647.6,69 L650,66 L654,71 Z" fill="#2f62c4"/><path d="M647.2,67.6 L650,64.6 L654,69.4 V71 H650 Z" fill="#4f86e0"/><path d="M650.6,59.4 A1.7,1.7 0 1 0 652,62 A1.4,1.4 0 0 1 650.6,59.4 Z" fill="#e8a33d"/><path d="M659.8,63.8 L662.0,66.2 L664.2,63.8" fill="none" stroke="#ddd" stroke-width="1.2" stroke-linecap="round" stroke-linejoin="round"/><rect x="670.6" y="57.4" width="7.6" height="7.6" rx="0.8" fill="#3b74d6"/><circle cx="677.8" cy="64.8" r="3.9" fill="#2b2b2b" stroke="#dcdcdc" stroke-width="1"/><path d="M687.0,62.1 L689.2,64.7 L691.4,62.1" fill="none" stroke="#ddd" stroke-width="1.2" stroke-linecap="round" stroke-linejoin="round"/><rect x="671.6" y="82" width="9.6" height="8" fill="none" stroke="#8a8a8a" stroke-width="0.9"/><rect x="670.7" y="81.1" width="1.8" height="1.8" fill="#4f8fe0"/><rect x="680.3000000000001" y="81.1" width="1.8" height="1.8" fill="#4f8fe0"/><rect x="670.7" y="89.1" width="1.8" height="1.8" fill="#4f8fe0"/><rect x="680.3000000000001" y="89.1" width="1.8" height="1.8" fill="#4f8fe0"/><rect x="700.2" y="52" width="0.8" height="43" fill="#444"/><rect x="714.6" y="58.6" width="13.4" height="13" fill="#e8a33d"/><rect x="711.6" y="55.6" width="8" height="8" fill="#2b2b2b" stroke="#cfcfcf" stroke-width="1"/><rect x="722.8" y="66.4" width="8" height="8" fill="#2b2b2b" stroke="#cfcfcf" stroke-width="1"/><path d="M735.8,63.8 L738.0,66.2 L740.2,63.8" fill="none" stroke="#ddd" stroke-width="1.2" stroke-linecap="round" stroke-linejoin="round"/><rect x="746.6" y="55.6" width="19.6" height="19" rx="1.6" fill="none" stroke="#555" stroke-width="1"/><path d="M767.6,62 L757,72.6" stroke="#8a8a8a" stroke-width="1.2" stroke-linecap="round"/><path d="M757.6,71.4 Q759,73.6 756.6,75 Q754.4,76 752.6,75 Q755,73.4 755.4,71.6 Z" fill="#3f6ea8"/><path d="M771.4,63.8 L773.6,66.2 L775.8,63.8" fill="none" stroke="#777" stroke-width="1.2" stroke-linecap="round" stroke-linejoin="round"/><path d="M787.8,58 L792.4,62.6 L788.2,66.2 L783.8,62 Z" fill="none" stroke="#8a8a8a" stroke-width="0.8" stroke-linejoin="round"/><path d="M792.8,61 Q794,63 793.2,64.4" fill="none" stroke="#3f6ea8" stroke-width="0.8"/><rect x="782.4" y="66.8" width="11.6" height="2.4" fill="#6a6a6a"/><path d="M798.8,62.4 L801.0,64.8 L803.2,62.4" fill="none" stroke="#8a8a8a" stroke-width="1.2" stroke-linecap="round" stroke-linejoin="round"/><path d="M790,81.6 H783 V88.4 H787" fill="none" stroke="#777" stroke-width="0.8"/><path d="M792.4,80.6 L794,82.2 L788.6,87.6 L786.4,88.2 L787,86 Z" fill="none" stroke="#3f6ea8" stroke-width="0.8" stroke-linejoin="round"/><rect x="782.4" y="89.4" width="11.6" height="2.4" fill="#3f6ea8"/><path d="M798.8,84.8 L801.0,87.2 L803.2,84.8" fill="none" stroke="#8a8a8a" stroke-width="1.2" stroke-linecap="round" stroke-linejoin="round"/><rect x="812.0" y="52" width="0.8" height="43" fill="#444"/><rect x="824.8" y="54.8" width="20" height="20" fill="none" stroke="#b5492a" stroke-width="1.3"/><rect x="827.4" y="57.4" width="6.4" height="6.4" fill="none" stroke="#b5492a" stroke-width="1"/><rect x="836" y="57.4" width="6.4" height="6.4" fill="none" stroke="#b5492a" stroke-width="1"/><rect x="827.4" y="66" width="6.4" height="6.4" fill="none" stroke="#b5492a" stroke-width="1"/><rect x="836" y="66" width="6.4" height="6.4" fill="none" stroke="#b5492a" stroke-width="1"/><rect x="858.2" y="52" width="0.8" height="43" fill="#444"/><rect x="873.6" y="57.6" width="19" height="14.6" fill="none" stroke="#a0a0a0" stroke-width="1.2"/><path d="M873.6,61.8 H892.4 M886.6,61.8 V72" stroke="#a0a0a0" stroke-width="1"/><path d="M876.6,53.2 H880.6 L878.6,58 H881.2 L873.6,67.6 L875.8,60.6 H873 Z" fill="#f0a93c"/><rect x="908.2" y="52" width="0.8" height="43" fill="#444"/><path d="M930,55.4 L938.4,60.2 V69.6 L930,74.4 L926.4,72.4 M921.8,66.4 V60.2 L930,55.4" fill="none" stroke="#2f5fae" stroke-width="1"/><path d="M922.6,66 L927,68.6 V73 L922.6,75.4 L918.4,73 V68.6 Z" fill="none" stroke="#2f5fae" stroke-width="1"/><rect x="948.6" y="52" width="0.8" height="43" fill="#444"/><rect x="962" y="53.2" width="22.6" height="22.6" rx="4.6" fill="#45a584"/><ellipse cx="973.3" cy="60.6" rx="4.4" ry="5.6" fill="none" stroke="#fff" stroke-width="1.1" transform="rotate(0 973.3 64.5) rotate(28 973.3 60.6)"/><ellipse cx="973.3" cy="60.6" rx="4.4" ry="5.6" fill="none" stroke="#fff" stroke-width="1.1" transform="rotate(60 973.3 64.5) rotate(28 973.3 60.6)"/><ellipse cx="973.3" cy="60.6" rx="4.4" ry="5.6" fill="none" stroke="#fff" stroke-width="1.1" transform="rotate(120 973.3 64.5) rotate(28 973.3 60.6)"/><ellipse cx="973.3" cy="60.6" rx="4.4" ry="5.6" fill="none" stroke="#fff" stroke-width="1.1" transform="rotate(180 973.3 64.5) rotate(28 973.3 60.6)"/><ellipse cx="973.3" cy="60.6" rx="4.4" ry="5.6" fill="none" stroke="#fff" stroke-width="1.1" transform="rotate(240 973.3 64.5) rotate(28 973.3 60.6)"/><ellipse cx="973.3" cy="60.6" rx="4.4" ry="5.6" fill="none" stroke="#fff" stroke-width="1.1" transform="rotate(300 973.3 64.5) rotate(28 973.3 60.6)"/><circle cx="195.6" cy="627.6" r="1.2" fill="none" stroke="#ddd" stroke-width="0.8"/><path d="M191,629.6 L194,630.4 H197.4 L200.2,629.6 M194,630.4 V633.4 L192.2,637.6 M197.4,630.4 V633 M195.6,633.4 L194.6,636" fill="none" stroke="#ddd" stroke-width="0.8" stroke-linecap="round" stroke-linejoin="round"/><path d="M196.6,634.4 L200,637.8 M200,634.4 L196.6,637.8" stroke="#ddd" stroke-width="0.9" stroke-linecap="round"/><path d="M634.4,630.6 H641.8 M633,633 H643.2 M633,635.4 H643.2" stroke="#ddd" stroke-width="0.9"/><path d="M636.4,629 L638.1,627.2 L639.8,629 Z" fill="#ddd"/><path d="M684.4,627.8 H692.4 V634 H688 L685.6,636.2 V634 H684.4 Z" fill="#e8e8e8" stroke="#e8e8e8" stroke-width="0.8" stroke-linejoin="round"/><rect x="756.6" y="627.2" width="9.6" height="9" rx="0.8" fill="none" stroke="#f0f0f0" stroke-width="1"/><rect x="760" y="628.6" width="5" height="3.2" fill="#f0f0f0"/><path d="M759.4,627.2 V636.2" stroke="#f0f0f0" stroke-width="0.8"/><path d="M760.4,633.8 H764.8" stroke="#f0f0f0" stroke-width="0.8"/><rect x="781.6" y="627.6" width="4.4" height="3.2" rx="0.5" fill="#e8e8e8"/><rect x="781.6" y="632.8" width="4.4" height="3.2" rx="0.5" fill="#e8e8e8"/><rect x="787.6" y="627.6" width="4.4" height="3.2" rx="0.5" fill="#e8e8e8"/><rect x="787.6" y="632.8" width="4.4" height="3.2" rx="0.5" fill="#e8e8e8"/><path d="M807.6,627.6 H812 V635.8 H807.6 Z M813,627.6 H817.4 V635.8 H813 Z" fill="none" stroke="#e0e0e0" stroke-width="0.9"/><path d="M808.8,629.6 H810.8 M808.8,631.4 H810.8 M808.8,633.2 H810.8 M814.2,629.6 H816.2 M814.2,631.4 H816.2 M814.2,633.2 H816.2" stroke="#e0e0e0" stroke-width="0.6"/><rect x="832.8" y="627.4" width="9.6" height="5.8" fill="none" stroke="#e0e0e0" stroke-width="1"/><rect x="834.4" y="629" width="6.4" height="1.6" fill="#e0e0e0"/><path d="M837.6,633.4 V636 M835.2,636.4 H840" stroke="#e0e0e0" stroke-width="1"/><rect x="856.6" y="631.2" width="5.4" height="1.4" fill="#f0f0f0"/><rect x="867" y="630.6" width="71" height="2.4" rx="1.2" fill="#6f6f6f"/><circle cx="903.4" cy="631.8" r="5.6" fill="#a9a9a9"/><path d="M942.6,631.9 H948.6 M945.6,628.9 V634.9" stroke="#f0f0f0" stroke-width="1.4"/><rect x="997.4" y="627" width="9.2" height="9.2" rx="0.8" fill="none" stroke="#e0e0e0" stroke-width="1"/><path d="M999,628.6 L1001,630.6 M1005,628.6 L1003,630.6 M999,634.6 L1001,632.6 M1005,634.6 L1003,632.6" stroke="#e0e0e0" stroke-width="1.3"/></svg>
</div>
</body></html>
